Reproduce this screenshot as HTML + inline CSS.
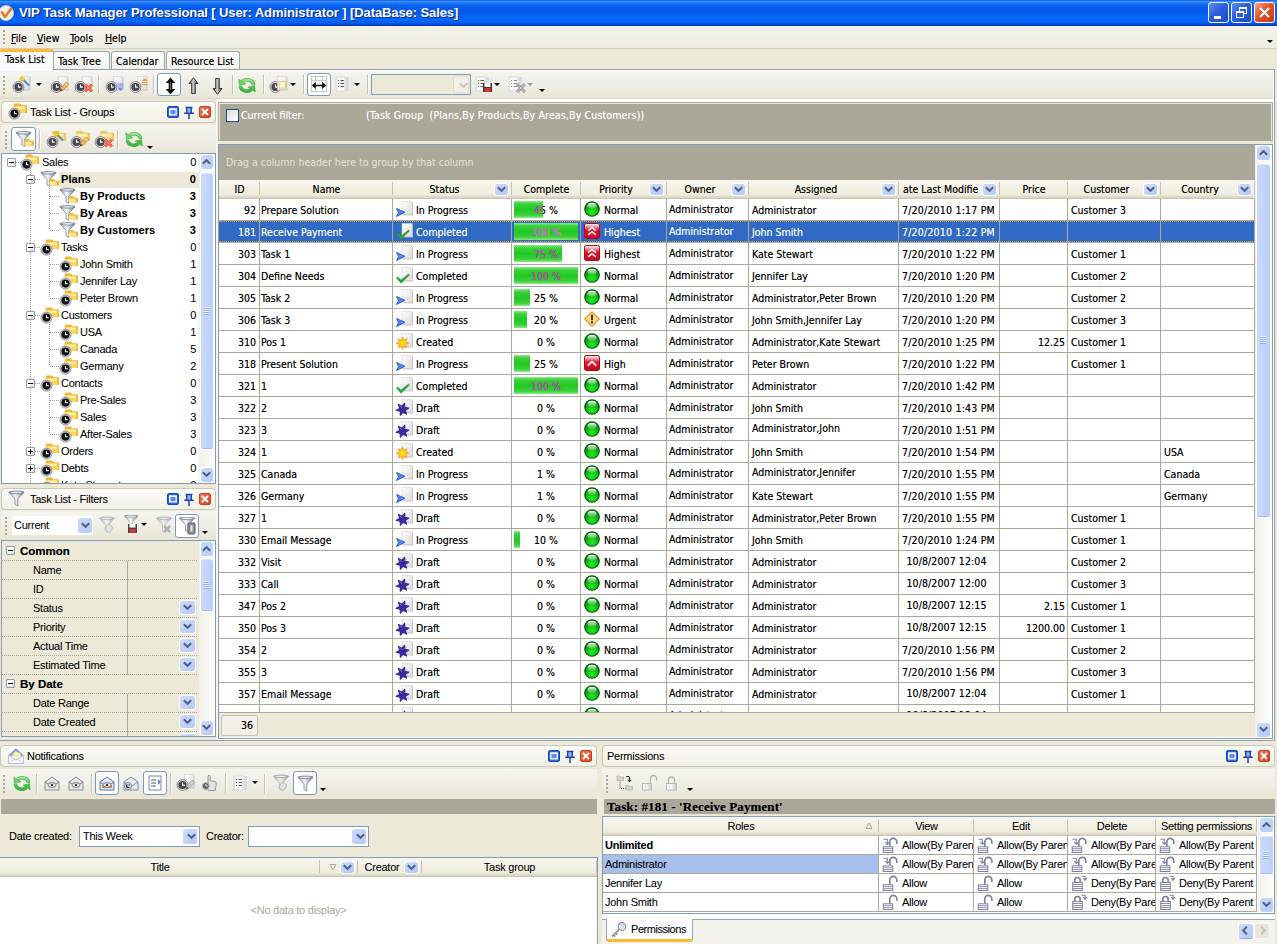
<!DOCTYPE html><html><head><meta charset="utf-8"><title>VIP Task Manager Professional</title><style>
*{box-sizing:border-box;margin:0;padding:0}
html,body{width:1277px;height:944px;overflow:hidden;background:#ECE9D8}
body{position:relative;font:10.5px "DejaVu Sans Condensed","Liberation Sans",sans-serif;color:#000;text-shadow:0 0 0 rgba(0,0,0,.5)}
.a{position:absolute}
.ms{font:11px "Liberation Sans",sans-serif;letter-spacing:-0.25px;text-shadow:0 0 0 rgba(0,0,0,.15)}
.t{position:absolute;white-space:nowrap;line-height:13px}
u{text-decoration:underline}
.title{left:0;top:0;width:1277px;height:26px;background:linear-gradient(to bottom,#0A5CF0 0%,#3C8CFF 6%,#1C72F8 13%,#0860EE 24%,#0459E8 42%,#0560F2 60%,#0668FC 76%,#0660F4 86%,#0348D4 94%,#0236B4 100%)}
.title .tx{left:19px;top:5px;color:#fff;font:bold 13px "Liberation Sans",sans-serif;line-height:16px;text-shadow:1px 1px 0 #0A2C8C;letter-spacing:-0.1px}
.wb{top:2px;width:21px;height:21px;border:1px solid #fff;border-radius:3px;background:linear-gradient(135deg,#5C8CF3 0%,#2B5FE0 45%,#1F4CC8 100%)}
.wb.x{background:linear-gradient(135deg,#F4A890 0%,#E2542E 45%,#C43A18 100%)}
.menubar{left:0;top:26px;width:1277px;height:23px;background:linear-gradient(to bottom,#F3F2EA,#EFEDE1)}
.tabs{left:0;top:48px;width:1277px;height:23px;background:#ECE9D8}
.tab{top:3px;height:18px;border:1px solid #91A7B4;border-bottom:none;border-radius:3px 3px 0 0;background:linear-gradient(to bottom,#FFFFFF,#F3F2EA);text-align:left;padding-left:4px;font-size:10.5px;line-height:19px;white-space:nowrap}
.tab.sel{top:1px;height:22px;background:#FCFCFE;border-top:3px solid #FFB834;border-radius:3px 3px 0 0;line-height:15px;padding-left:5px;z-index:2}
.tbar{background:linear-gradient(to bottom,#F5F4EE 0%,#F0EFE6 50%,#E8E5D6 100%)}
.grip{width:2px;background-image:repeating-linear-gradient(to bottom,#A8A592 0,#A8A592 2px,transparent 2px,transparent 4px)}
.sep{width:1px;background:#C5C2B2;box-shadow:1px 0 0 #fff}
.pressed{border:1px solid #7A98C2;border-radius:3px;background:#FEFEFD}
.arr{width:0;height:0;border-left:3px solid transparent;border-right:3px solid transparent;border-top:3px solid #000}
.phead{border:1px solid #C9C7BA;border-radius:4px;background:linear-gradient(to bottom,#FBFBF7,#F1F0E6)}
.pb{width:12px;height:12px;border-radius:2px}
.pb.sq{background:#2C66DE;border:1px solid #1B49B8}
.pb.sq:after{content:"";position:absolute;left:1px;top:1px;width:8px;height:8px;border:1.500px solid #fff;border-top-width:2px}
.pb.cl{background:linear-gradient(135deg,#F07A5C,#D8401C);border:1px solid #C8401E}
.sb{background:linear-gradient(to right,#F1F0E9,#FEFEFC)}
.sbtn{border:1px solid #fff;border-radius:3px;background:linear-gradient(135deg,#CDDCFD,#B5C8F7);background-clip:padding-box}
.sthumb{border:1px solid #fff;border-radius:3px;background:linear-gradient(to right,#CBDAFD,#BCCDF9);background-clip:padding-box;box-shadow:inset 0 -1px 0 #9EB8F2, inset 0 1px 0 #D8E4FE}
.cb{width:16px;height:16px;border-radius:3px;background:linear-gradient(135deg,#CDDCFD,#B5C8F7);border:1px solid #fff;background-clip:padding-box}
.hdr{background:linear-gradient(to bottom,#F7F6EE 0%,#EFEDDE 80%,#D8D2BD 100%);border-bottom:1px solid #CBC7B8}
.hc{position:absolute;top:0;height:18px;text-align:center;line-height:19px;white-space:nowrap;overflow:hidden}
.hc:after{content:"";position:absolute;right:0;top:2px;height:13px;width:1px;background:#C5C2B2;box-shadow:1px 0 0 #fff}
.fb{position:absolute;width:15px;height:13px;border-radius:3px;background:linear-gradient(135deg,#CDDCFD,#B5C8F7);border:1px solid #fff;background-clip:padding-box}
.row{position:absolute;left:0;height:22px;border-bottom:1px solid #ACA899}
.c{position:absolute;top:0;height:21px;border-right:1px solid #ACA899;white-space:nowrap;overflow:hidden;line-height:22px}
.row.sel .c{background:#316AC5;color:#fff;text-shadow:0 0 0 rgba(255,255,255,.5)}
.bar{position:absolute;left:2px;top:2px;height:17px;background:linear-gradient(to bottom,#8CE98A 0%,#38D038 18%,#22C822 50%,#38D038 82%,#8CE98A 100%)}
</style></head><body><div class="a title"><div class="t tx">VIP Task Manager Professional [ User: Administrator ] [DataBase: Sales]</div><svg width="16" height="16" viewBox="0 0 16 16" style="display:block;position:absolute;left:-2px;top:5px"><circle cx="8" cy="8" r="7.500" fill="#f6f3ec" stroke="#c8c2b0"/><path d="M3.500 6.500l3.500 5.500 6.500-9" stroke="#e8791a" stroke-width="2.600" fill="none" stroke-linejoin="round"/></svg><div class="a wb" style="left:1208px"><div class="a" style="left:5px;top:13px;width:7px;height:3px;background:#fff"></div></div><div class="a wb" style="left:1231px"><div class="a" style="left:7px;top:4px;width:8px;height:7px;border:1px solid #fff;border-top-width:2px"></div><div class="a" style="left:4px;top:8px;width:8px;height:7px;border:1px solid #fff;border-top-width:2px;background:#2B5FE0"></div></div><div class="a wb x" style="left:1254px"><svg width="19" height="19" viewBox="0 0 19 19" style="display:block;"><path d="M5 5l9 9M14 5l-9 9" stroke="#fff" stroke-width="2.200"/></svg></div></div><div class="a menubar"><div class="a grip" style="left:3px;top:4px;height:16px;width:2px"></div><div class="t" style="left:11px;top:6px"><u>F</u>ile</div><div class="t" style="left:37px;top:6px"><u>V</u>iew</div><div class="t" style="left:70px;top:6px"><u>T</u>ools</div><div class="t" style="left:105px;top:6px"><u>H</u>elp</div><div class="a arr" style="left:1267px;top:14px;border-top-color:#000"></div></div><div class="a tabs"><div class="a" style="left:0;top:0;width:1277px;height:1px;background:#D3CFBE"></div><div class="a" style="left:0;top:21px;width:1275px;height:1px;background:#8E9DB0"></div><div class="a" style="left:0;top:22px;width:1274px;height:1px;background:#fff"></div><div class="a" style="left:1274px;top:21px;width:1px;height:32px;background:#8E9DB0"></div><div class="a" style="left:1273px;top:22px;width:1px;height:31px;background:#fff"></div><div class="a tab sel" style="left:-1px;width:55px">Task List</div><div class="a tab" style="left:53px;width:57px">Task Tree</div><div class="a tab" style="left:111px;width:54px">Calendar</div><div class="a tab" style="left:166px;width:74px">Resource List</div></div><div class="a tbar" style="left:0;top:71px;width:1273px;height:28px;border-bottom:1px solid #DAD7C8"><div class="a grip" style="left:3px;top:5px;height:18px"></div><div class="a" style="left:12px;top:4px;"><svg width="22" height="19" viewBox="0 0 22 19" style="display:block;"><defs><linearGradient id="g1" x1="0" y1="0" x2="1" y2="1"><stop offset="0" stop-color="#ffffff"/><stop offset="1" stop-color="#dcdcdc"/></linearGradient></defs><rect x="9.4" y="2.4" width="9" height="13" fill="#bdbdbd"/><rect x="8.5" y="1.5" width="9" height="13" fill="url(#g1)" stroke="#d0d0d0" stroke-width="0.6"/><circle cx="6.5" cy="12" r="5.5" fill="#d4d4e2" stroke="#6a6a78" stroke-width="0.7"/><circle cx="6.5" cy="12" r="4.1" fill="#4a4a4a"/><path d="M6.5 9.6V12.1H8.8" stroke="#fff" stroke-width="1.1" fill="none"/><path d="M11.500 5l5.500 5.500" stroke="#4a86e0" stroke-width="1.900"/><path d="M10.200 1.300l0.900 1.900 2 0.300-1.500 1.400 0.400 2-1.800-1-1.800 1 0.400-2-1.500-1.400 2-0.300z" fill="#f5d020" stroke="#b89a10" stroke-width="0.400"/></svg></div><div class="a arr" style="left:36px;top:12px;border-top-color:#000"></div><div class="a" style="left:50px;top:4px;"><svg width="22" height="19" viewBox="0 0 22 19" style="display:block;"><defs><linearGradient id="g2" x1="0" y1="0" x2="1" y2="1"><stop offset="0" stop-color="#ffffff"/><stop offset="1" stop-color="#dcdcdc"/></linearGradient></defs><rect x="9.4" y="2.4" width="9" height="13" fill="#bdbdbd"/><rect x="8.5" y="1.5" width="9" height="13" fill="url(#g2)" stroke="#d0d0d0" stroke-width="0.6"/><circle cx="6.5" cy="12" r="5.5" fill="#d4d4e2" stroke="#6a6a78" stroke-width="0.7"/><circle cx="6.5" cy="12" r="4.1" fill="#4a4a4a"/><path d="M6.5 9.6V12.1H8.8" stroke="#fff" stroke-width="1.1" fill="none"/><path d="M10 16l0.800-3.200 5.700-5.800 2.400 2.400-5.700 5.800z" fill="#f2b45a" stroke="#a8702a" stroke-width="0.600"/><path d="M15.300 8.200l2.400 2.400" stroke="#d8d8d8" stroke-width="1.200"/><path d="M10 16l0.700-2.600 1.900 1.900z" fill="#333"/></svg></div><div class="a" style="left:74px;top:4px;"><svg width="22" height="19" viewBox="0 0 22 19" style="display:block;"><defs><linearGradient id="g3" x1="0" y1="0" x2="1" y2="1"><stop offset="0" stop-color="#ffffff"/><stop offset="1" stop-color="#dcdcdc"/></linearGradient></defs><rect x="9.4" y="2.4" width="9" height="13" fill="#bdbdbd"/><rect x="8.5" y="1.5" width="9" height="13" fill="url(#g3)" stroke="#d0d0d0" stroke-width="0.6"/><circle cx="6.5" cy="12" r="5.5" fill="#d4d4e2" stroke="#6a6a78" stroke-width="0.7"/><circle cx="6.5" cy="12" r="4.1" fill="#4a4a4a"/><path d="M6.5 9.6V12.1H8.8" stroke="#fff" stroke-width="1.1" fill="none"/><path d="M11 9.500l7 7M18 9.500l-7 7" stroke="#ef4a3c" stroke-width="2.900"/><path d="M11 9.500l7 7M18 9.500l-7 7" stroke="#ffb0a0" stroke-width="0.800"/></svg></div><div class="a sep" style="left:98px;top:4px;height:19px"></div><div class="a" style="left:105px;top:4px;"><svg width="22" height="19" viewBox="0 0 22 19" style="display:block;"><defs><linearGradient id="g4" x1="0" y1="0" x2="1" y2="1"><stop offset="0" stop-color="#ffffff"/><stop offset="1" stop-color="#dcdcdc"/></linearGradient></defs><rect x="9.4" y="2.4" width="9" height="13" fill="#bdbdbd"/><rect x="8.5" y="1.5" width="9" height="13" fill="url(#g4)" stroke="#d0d0d0" stroke-width="0.6"/><circle cx="6.5" cy="12" r="5.5" fill="#d4d4e2" stroke="#6a6a78" stroke-width="0.7"/><circle cx="6.5" cy="12" r="4.1" fill="#4a4a4a"/><path d="M6.5 9.6V12.1H8.8" stroke="#fff" stroke-width="1.1" fill="none"/><path d="M12.500 9h6M12.500 11h6" stroke="#6c8cf0" stroke-width="1.100"/><path d="M12.500 12.500h6l-3 3.500z" fill="#6c8cf0"/></svg></div><div class="a" style="left:129px;top:4px;"><svg width="22" height="19" viewBox="0 0 22 19" style="display:block;"><defs><linearGradient id="g5" x1="0" y1="0" x2="1" y2="1"><stop offset="0" stop-color="#ffffff"/><stop offset="1" stop-color="#dcdcdc"/></linearGradient></defs><rect x="9.4" y="2.4" width="9" height="13" fill="#bdbdbd"/><rect x="8.5" y="1.5" width="9" height="13" fill="url(#g5)" stroke="#d0d0d0" stroke-width="0.6"/><circle cx="6.5" cy="12" r="5.5" fill="#d4d4e2" stroke="#6a6a78" stroke-width="0.7"/><circle cx="6.5" cy="12" r="4.1" fill="#4a4a4a"/><path d="M6.5 9.6V12.1H8.8" stroke="#fff" stroke-width="1.1" fill="none"/><path d="M15.500 3l3 3.300h-6z" fill="#f59a4c"/><path d="M12.500 7.500h6M12.500 9.500h6" stroke="#f59a4c" stroke-width="1.100"/></svg></div><div class="a sep" style="left:153px;top:4px;height:19px"></div><div class="a pressed" style="left:157px;top:2px;width:24px;height:23px"></div><div class="a" style="left:165px;top:6px;"><svg width="11" height="18" viewBox="0 0 11 18" style="display:block;"><defs><linearGradient id="g6" x1="0" y1="0" x2="1" y2="0"><stop offset="0" stop-color="#000"/><stop offset="0.5" stop-color="#666"/><stop offset="1" stop-color="#000"/></linearGradient></defs><path d="M5.500 0.500l4.800 5.500h-3v6h3l-4.800 5.500-4.800-5.500h3v-6h-3z" fill="#0a0a0a"/><rect x="4.300" y="5" width="2.400" height="8" fill="url(#g6)"/></svg></div><div class="a" style="left:188px;top:6px;"><svg width="11" height="18" viewBox="0 0 11 18" style="display:block;"><defs><linearGradient id="g7" x1="0" y1="0" x2="1" y2="0"><stop offset="0" stop-color="#3c3c3c"/><stop offset="0.45" stop-color="#cfcfcf"/><stop offset="1" stop-color="#303030"/></linearGradient></defs><path d="M5.500 0.800l4.500 5.700h-2.700v10h-3.600v-10h-2.700z" fill="url(#g7)" stroke="#2a2a2a" stroke-width="0.900" stroke-linejoin="round"/></svg></div><div class="a" style="left:212px;top:6px;"><svg width="11" height="18" viewBox="0 0 11 18" style="display:block;"><defs><linearGradient id="g8" x1="0" y1="0" x2="1" y2="0"><stop offset="0" stop-color="#3c3c3c"/><stop offset="0.45" stop-color="#cfcfcf"/><stop offset="1" stop-color="#303030"/></linearGradient></defs><path d="M5.500 17.200l4.500-5.700h-2.700v-10h-3.600v10h-2.700z" fill="url(#g8)" stroke="#2a2a2a" stroke-width="0.900" stroke-linejoin="round"/></svg></div><div class="a sep" style="left:232px;top:4px;height:19px"></div><div class="a" style="left:238px;top:6px;"><svg width="18" height="17" viewBox="0 0 18 17" style="display:block;"><defs><linearGradient id="g9" gradientUnits="userSpaceOnUse" x1="0" y1="0" x2="0" y2="17"><stop offset="0" stop-color="#b4f0ac"/><stop offset="0.5" stop-color="#5ccc5c"/><stop offset="1" stop-color="#2ea836"/></linearGradient></defs><path d="M15.600 7.800A6.400 5.400 0 0 0 4.600 4.400" fill="none" stroke="#3aa840" stroke-width="3.400"/><path d="M15.600 7.800A6.400 5.400 0 0 0 4.600 4.400" fill="none" stroke="url(#g9)" stroke-width="2.400"/><path d="M0.800 2l0.600 6.600 6.400-1.800z" fill="#6cd468" stroke="#3aa840" stroke-width="0.600" stroke-linejoin="round"/><path d="M2.400 9.200A6.400 5.400 0 0 0 13.400 12.600" fill="none" stroke="#3aa840" stroke-width="3.400"/><path d="M2.400 9.200A6.400 5.400 0 0 0 13.400 12.600" fill="none" stroke="url(#g9)" stroke-width="2.400"/><path d="M17.200 15l-0.600-6.600-6.400 1.800z" fill="#4cc04c" stroke="#3aa840" stroke-width="0.600" stroke-linejoin="round"/></svg></div><div class="a sep" style="left:263px;top:4px;height:19px"></div><div class="a" style="left:269px;top:4px;"><svg width="22" height="19" viewBox="0 0 22 19" style="display:block;"><circle cx="6.5" cy="12" r="5.5" fill="#d4d4e2" stroke="#6a6a78" stroke-width="0.7"/><circle cx="6.5" cy="12" r="4.1" fill="#4a4a4a"/><path d="M6.5 9.6V12.1H8.8" stroke="#fff" stroke-width="1.1" fill="none"/><defs><linearGradient id="g10" x1="0" y1="0" x2="1" y2="1"><stop offset="0" stop-color="#ffffff"/><stop offset="1" stop-color="#dcdcdc"/></linearGradient></defs><rect x="9.4" y="2.4" width="9" height="13" fill="#bdbdbd"/><rect x="8.5" y="1.5" width="9" height="13" fill="url(#g10)" stroke="#d0d0d0" stroke-width="0.6"/><rect x="10" y="6.500" width="6.500" height="6.500" fill="#fdf6c0" stroke="#d8c878" stroke-width="0.800"/></svg></div><div class="a arr" style="left:290px;top:12px;border-top-color:#000"></div><div class="a sep" style="left:303px;top:4px;height:19px"></div><div class="a pressed" style="left:307px;top:2px;width:24px;height:23px"></div><div class="a" style="left:310px;top:4px;"><svg width="18" height="18" viewBox="0 0 18 18" style="display:block;"><rect x="1.500" y="1.500" width="15" height="15" fill="#fff" stroke="#c4c4c4"/><path d="M1.500 5.500h15M5.500 1.500v15M12.500 1.500v15" stroke="#cdcdcd"/><path d="M3 10.500h12" stroke="#111" stroke-width="1.600"/><path d="M1.800 10.500l4-3.500v7zM16.200 10.500l-4-3.500v7z" fill="#111"/></svg></div><div class="a" style="left:335px;top:4px;"><svg width="18" height="18" viewBox="0 0 18 18" style="display:block;"><rect x="1" y="2" width="9" height="14" fill="#f8f8f8" stroke="#cfcfcf" stroke-width="0.800"/><rect x="11" y="2" width="3" height="14" fill="#dcdcdc"/><rect x="15" y="2" width="2" height="14" fill="#e8e8e8"/><path d="M3 5.500h1M3 8.500h1M3 11.500h1M5.500 5.500h3.500M5.500 8.500h3.500M5.500 11.500h3.500" stroke="#555" stroke-width="1.200"/></svg></div><div class="a arr" style="left:354px;top:12px;border-top-color:#000"></div><div class="a sep" style="left:367px;top:4px;height:19px"></div><div class="a" style="left:371px;top:3px;width:100px;height:21px;border:1px solid #7F9DB9;background:#ECE9D8"><div class="a" style="right:1px;top:1px;width:16px;height:17px;background:#F1EFE6;border:1px solid #DEDBCB;border-radius:2px"></div><svg class="a" style="left:87px;top:7px" width="9" height="9" viewBox="0 0 9 9"><path d="M0.800 1.200l3.700 3.600 3.700-3.600" stroke="#C9C7BA" stroke-width="2" fill="none"/></svg></div><div class="a" style="left:475px;top:4px;"><svg width="18" height="18" viewBox="0 0 18 18" style="display:block;"><rect x="1" y="2" width="9" height="14" fill="#f8f8f8" stroke="#cfcfcf" stroke-width="0.800"/><rect x="11" y="2" width="3" height="14" fill="#dcdcdc"/><rect x="15" y="2" width="2" height="14" fill="#e8e8e8"/><path d="M3 5.500h1M3 8.500h1M3 11.500h1M5.500 5.500h3.500M5.500 8.500h3.500M5.500 11.500h3.500" stroke="#555" stroke-width="1.200"/><rect x="8" y="8" width="9" height="9" fill="#3a3a3a"/><rect x="9.500" y="8" width="6" height="4" fill="#fff"/><rect x="9.500" y="13" width="6" height="4" fill="#e03030"/></svg></div><div class="a arr" style="left:494px;top:12px;border-top-color:#000"></div><div class="a" style="left:508px;top:4px;"><svg width="18" height="18" viewBox="0 0 18 18" style="display:block;"><rect x="1" y="2" width="9" height="14" fill="#f8f8f8" stroke="#cfcfcf" stroke-width="0.800"/><rect x="11" y="2" width="3" height="14" fill="#dcdcdc"/><rect x="15" y="2" width="2" height="14" fill="#e8e8e8"/><path d="M3 5.500h1M3 8.500h1M3 11.500h1M5.500 5.500h3.500M5.500 8.500h3.500M5.500 11.500h3.500" stroke="#8a8a8a" stroke-width="1.200"/><path d="M9 9l8 8M17 9l-8 8" stroke="#9c9c9c" stroke-width="3"/><path d="M9 9l8 8M17 9l-8 8" stroke="#c8c8c8" stroke-width="1"/></svg></div><div class="a arr" style="left:527px;top:12px;border-top-color:#9A9887"></div><div class="a arr" style="left:539px;top:18px;border-top-color:#000"></div></div><div class="a phead" style="left:1px;top:101px;width:215px;height:22px"><div class="a" style="left:6px;top:1px;"><svg width="19" height="17" viewBox="0 0 19 17" style="display:block;"><g opacity="1"><path d="M5.5 2.0q0-1.500 1.500-1.500h4.800000000000001l1.500 1.800h5.04q1.200 0 1.200 1.200v6.5h-12z" fill="#eab83a"/><rect x="5.5" y="3.1" width="12" height="6.9" rx="1.200" fill="#ffd75e"/><rect x="6.3" y="3.7" width="10.4" height="2.200" rx="0.800" fill="#fff3b8" opacity="0.85"/></g><circle cx="6.5" cy="10.6" r="5.5" fill="#d4d4e2" stroke="#6a6a78" stroke-width="0.7"/><circle cx="6.5" cy="10.6" r="4.1" fill="#141414"/><path d="M6.5 8.2V10.7H8.8" stroke="#fff" stroke-width="1.1" fill="none"/></svg></div><div class="t ms" style="left:28px;top:4px">Task List - Groups</div><div class="a" style="left:165px;top:4px;"><svg width="12" height="12" viewBox="0 0 12 12" style="display:block;"><rect x="0.500" y="0.500" width="11" height="11" rx="1.500" fill="#2A64DC" stroke="#1A48B4"/><rect x="2.800" y="3.300" width="6.400" height="5.600" fill="#5C8CF0" stroke="#fff" stroke-width="1.300"/><path d="M2.200 3h7.600" stroke="#fff" stroke-width="1.200"/></svg></div><div class="a" style="left:181px;top:4px;"><svg width="12" height="13" viewBox="0 0 12 13" style="display:block;"><rect x="4.300" y="2" width="3.400" height="4.500" fill="#8CB8F4"/><path d="M2.500 1.600h7M3.800 2v4.800M8.200 2v4.800M1.200 7.300h9.600M6 8v5" stroke="#1E40B0" stroke-width="1.500" fill="none"/></svg></div><div class="a pb cl" style="left:197px;top:4px"><svg width="10" height="10" viewBox="0 0 10 10" style="display:block;"><path d="M2 2l6 6M8 2l-6 6" stroke="#fff" stroke-width="1.800"/></svg></div></div><div class="a tbar" style="left:1px;top:125px;width:215px;height:28px"><div class="a grip" style="left:4px;top:6px;height:18px"></div><div class="a pressed" style="left:10px;top:2px;width:25px;height:24px"></div><div class="a" style="left:14px;top:6px;"><svg width="19" height="17" viewBox="0 0 19 17" style="display:block;"><defs><linearGradient id="g11" x1="0" y1="0" x2="1" y2="0"><stop offset="0" stop-color="#aab2c0"/><stop offset="0.45" stop-color="#f4f6fa"/><stop offset="1" stop-color="#6c7686"/></linearGradient></defs><g transform="translate(0.5 0.5) scale(1.0)"><path d="M0.500 1.200l6 6.800v5.500l2.800 1.500v-7l6.200-6.800z" fill="url(#g11)" stroke="#6c7686" stroke-width="0.700" stroke-linejoin="round"/><ellipse cx="8" cy="1.300" rx="7.600" ry="1.300" fill="#aab2c0" stroke="#6c7686" stroke-width="0.700"/><ellipse cx="8" cy="1.300" rx="5.500" ry="0.600" fill="#f4f6fa"/></g><g opacity="1"><path d="M9.5 9.5q0-1.500 1.500-1.500h3.0l1.500 1.800h3.15q1.200 0 1.200 1.200v3.5h-7.5z" fill="#eab83a"/><rect x="9.5" y="10.6" width="7.5" height="3.9" rx="1.200" fill="#ffd75e"/><rect x="10.3" y="11.2" width="5.9" height="2.200" rx="0.800" fill="#fff3b8" opacity="0.85"/></g></svg></div><div class="a sep" style="left:38px;top:5px;height:19px"></div><div class="a" style="left:45px;top:5px;"><svg width="22" height="19" viewBox="0 0 22 19" style="display:block;"><g opacity="0.75"><path d="M6 2.5q0-1.500 1.500-1.500h4.800000000000001l1.500 1.800h5.04q1.200 0 1.200 1.200v7h-12z" fill="#eab83a"/><rect x="6" y="3.6" width="12" height="7.4" rx="1.200" fill="#ffd75e"/><rect x="6.8" y="4.2" width="10.4" height="2.200" rx="0.800" fill="#fff3b8" opacity="0.85"/></g><circle cx="6.5" cy="12" r="5.5" fill="#d4d4e2" stroke="#6a6a78" stroke-width="0.7"/><circle cx="6.5" cy="12" r="4.1" fill="#4a4a4a"/><path d="M6.5 9.6V12.1H8.8" stroke="#fff" stroke-width="1.1" fill="none"/><path d="M11.500 5l5.500 5.500" stroke="#4a86e0" stroke-width="1.900"/><path d="M10.200 1.300l0.900 1.900 2 0.300-1.500 1.400 0.400 2-1.800-1-1.800 1 0.400-2-1.500-1.400 2-0.300z" fill="#f5d020" stroke="#b89a10" stroke-width="0.400"/></svg></div><div class="a" style="left:69px;top:5px;"><svg width="22" height="19" viewBox="0 0 22 19" style="display:block;"><g opacity="0.75"><path d="M6 2.5q0-1.500 1.500-1.500h4.800000000000001l1.500 1.800h5.04q1.200 0 1.200 1.200v7h-12z" fill="#eab83a"/><rect x="6" y="3.6" width="12" height="7.4" rx="1.200" fill="#ffd75e"/><rect x="6.8" y="4.2" width="10.4" height="2.200" rx="0.800" fill="#fff3b8" opacity="0.85"/></g><circle cx="6.5" cy="12" r="5.5" fill="#d4d4e2" stroke="#6a6a78" stroke-width="0.7"/><circle cx="6.5" cy="12" r="4.1" fill="#4a4a4a"/><path d="M6.5 9.6V12.1H8.8" stroke="#fff" stroke-width="1.1" fill="none"/><path d="M10 16l0.800-3.200 5.700-5.800 2.400 2.400-5.700 5.800z" fill="#f2b45a" stroke="#a8702a" stroke-width="0.600"/><path d="M15.300 8.200l2.400 2.400" stroke="#d8d8d8" stroke-width="1.200"/><path d="M10 16l0.700-2.600 1.900 1.900z" fill="#333"/></svg></div><div class="a" style="left:93px;top:5px;"><svg width="22" height="19" viewBox="0 0 22 19" style="display:block;"><g opacity="0.75"><path d="M6 2.5q0-1.500 1.500-1.500h4.800000000000001l1.500 1.800h5.04q1.200 0 1.200 1.200v7h-12z" fill="#eab83a"/><rect x="6" y="3.6" width="12" height="7.4" rx="1.200" fill="#ffd75e"/><rect x="6.8" y="4.2" width="10.4" height="2.200" rx="0.800" fill="#fff3b8" opacity="0.85"/></g><circle cx="6.5" cy="12" r="5.5" fill="#d4d4e2" stroke="#6a6a78" stroke-width="0.7"/><circle cx="6.5" cy="12" r="4.1" fill="#4a4a4a"/><path d="M6.5 9.6V12.1H8.8" stroke="#fff" stroke-width="1.1" fill="none"/><path d="M11 9.500l7 7M18 9.500l-7 7" stroke="#ef4a3c" stroke-width="2.900"/><path d="M11 9.500l7 7M18 9.500l-7 7" stroke="#ffb0a0" stroke-width="0.800"/></svg></div><div class="a sep" style="left:116px;top:5px;height:19px"></div><div class="a" style="left:124px;top:6px;"><svg width="18" height="17" viewBox="0 0 18 17" style="display:block;"><defs><linearGradient id="g12" gradientUnits="userSpaceOnUse" x1="0" y1="0" x2="0" y2="17"><stop offset="0" stop-color="#b4f0ac"/><stop offset="0.5" stop-color="#5ccc5c"/><stop offset="1" stop-color="#2ea836"/></linearGradient></defs><path d="M15.600 7.800A6.400 5.400 0 0 0 4.600 4.400" fill="none" stroke="#3aa840" stroke-width="3.400"/><path d="M15.600 7.800A6.400 5.400 0 0 0 4.600 4.400" fill="none" stroke="url(#g12)" stroke-width="2.400"/><path d="M0.800 2l0.600 6.600 6.400-1.800z" fill="#6cd468" stroke="#3aa840" stroke-width="0.600" stroke-linejoin="round"/><path d="M2.400 9.200A6.400 5.400 0 0 0 13.400 12.600" fill="none" stroke="#3aa840" stroke-width="3.400"/><path d="M2.400 9.200A6.400 5.400 0 0 0 13.400 12.600" fill="none" stroke="url(#g12)" stroke-width="2.400"/><path d="M17.200 15l-0.600-6.600-6.400 1.800z" fill="#4cc04c" stroke="#3aa840" stroke-width="0.600" stroke-linejoin="round"/></svg></div><div class="a arr" style="left:146px;top:21px;border-top-color:#000"></div></div><div class="a" style="left:1px;top:153px;width:215px;height:331px;border:1px solid #7F9DB9;background:#fff;overflow:hidden"><div class="a" style="left:28px;top:14px;width:1px;height:316px;background:repeating-linear-gradient(to bottom,#A0A0A0 0,#A0A0A0 1px,transparent 1px,transparent 2px)"></div><div class="a" style="left:47px;top:30px;width:1px;height:46px;background:repeating-linear-gradient(to bottom,#A0A0A0 0,#A0A0A0 1px,transparent 1px,transparent 2px)"></div><div class="a" style="left:47px;top:98px;width:1px;height:46px;background:repeating-linear-gradient(to bottom,#A0A0A0 0,#A0A0A0 1px,transparent 1px,transparent 2px)"></div><div class="a" style="left:47px;top:166px;width:1px;height:46px;background:repeating-linear-gradient(to bottom,#A0A0A0 0,#A0A0A0 1px,transparent 1px,transparent 2px)"></div><div class="a" style="left:47px;top:234px;width:1px;height:46px;background:repeating-linear-gradient(to bottom,#A0A0A0 0,#A0A0A0 1px,transparent 1px,transparent 2px)"></div><div class="a" style="left:10px;top:8px;height:1px;width:9px;background:repeating-linear-gradient(to right,#A0A0A0 0,#A0A0A0 1px,transparent 1px,transparent 2px)"></div><div class="a" style="left:5px;top:4px;width:9px;height:9px;border:1px solid #8C9CB4;border-radius:1px;background:linear-gradient(135deg,#fff 45%,#D8D4C4)"><div class="a" style="left:1px;top:3px;width:5px;height:1px;background:#000"></div></div><div class="a" style="left:18px;top:0px;"><svg width="19" height="17" viewBox="0 0 19 17" style="display:block;"><g opacity="1"><path d="M5.5 2.0q0-1.500 1.500-1.500h4.800000000000001l1.500 1.800h5.04q1.200 0 1.200 1.200v6.5h-12z" fill="#eab83a"/><rect x="5.5" y="3.1" width="12" height="6.9" rx="1.200" fill="#ffd75e"/><rect x="6.3" y="3.7" width="10.4" height="2.200" rx="0.800" fill="#fff3b8" opacity="0.85"/></g><circle cx="6.5" cy="10.6" r="5.5" fill="#d4d4e2" stroke="#6a6a78" stroke-width="0.7"/><circle cx="6.5" cy="10.6" r="4.1" fill="#141414"/><path d="M6.5 8.2V10.7H8.8" stroke="#fff" stroke-width="1.1" fill="none"/></svg></div><div class="t ms" style="left:40px;top:2px;">Sales</div><div class="t ms" style="right:19px;top:2px;">0</div><div class="a" style="left:29px;top:25px;height:1px;width:9px;background:repeating-linear-gradient(to right,#A0A0A0 0,#A0A0A0 1px,transparent 1px,transparent 2px)"></div><div class="a" style="left:57px;top:18px;width:140px;height:16px;background:#ECE9D8"></div><div class="a" style="left:24px;top:21px;width:9px;height:9px;border:1px solid #8C9CB4;border-radius:1px;background:linear-gradient(135deg,#fff 45%,#D8D4C4)"><div class="a" style="left:1px;top:3px;width:5px;height:1px;background:#000"></div></div><div class="a" style="left:38px;top:17px;"><svg width="19" height="17" viewBox="0 0 19 17" style="display:block;"><defs><linearGradient id="g13" x1="0" y1="0" x2="1" y2="0"><stop offset="0" stop-color="#aab2c0"/><stop offset="0.45" stop-color="#f4f6fa"/><stop offset="1" stop-color="#6c7686"/></linearGradient></defs><g transform="translate(0.5 0.5) scale(1.0)"><path d="M0.500 1.200l6 6.800v5.500l2.800 1.500v-7l6.200-6.800z" fill="url(#g13)" stroke="#6c7686" stroke-width="0.700" stroke-linejoin="round"/><ellipse cx="8" cy="1.300" rx="7.600" ry="1.300" fill="#aab2c0" stroke="#6c7686" stroke-width="0.700"/><ellipse cx="8" cy="1.300" rx="5.500" ry="0.600" fill="#f4f6fa"/></g><g opacity="1"><path d="M9.5 9.5q0-1.500 1.500-1.500h3.0l1.500 1.800h3.15q1.200 0 1.200 1.200v3.5h-7.5z" fill="#eab83a"/><rect x="9.5" y="10.6" width="7.5" height="3.9" rx="1.200" fill="#ffd75e"/><rect x="10.3" y="11.2" width="5.9" height="2.200" rx="0.800" fill="#fff3b8" opacity="0.85"/></g></svg></div><div class="t ms" style="left:59px;top:19px;font-weight:bold;letter-spacing:0.05px;">Plans</div><div class="t ms" style="right:19px;top:19px;font-weight:bold;letter-spacing:0.05px;">0</div><div class="a" style="left:48px;top:42px;height:1px;width:9px;background:repeating-linear-gradient(to right,#A0A0A0 0,#A0A0A0 1px,transparent 1px,transparent 2px)"></div><div class="a" style="left:57px;top:34px;"><svg width="19" height="17" viewBox="0 0 19 17" style="display:block;"><defs><linearGradient id="g14" x1="0" y1="0" x2="1" y2="0"><stop offset="0" stop-color="#aab2c0"/><stop offset="0.45" stop-color="#f4f6fa"/><stop offset="1" stop-color="#6c7686"/></linearGradient></defs><g transform="translate(0.5 0.5) scale(1.0)"><path d="M0.500 1.200l6 6.800v5.500l2.800 1.500v-7l6.200-6.800z" fill="url(#g14)" stroke="#6c7686" stroke-width="0.700" stroke-linejoin="round"/><ellipse cx="8" cy="1.300" rx="7.600" ry="1.300" fill="#aab2c0" stroke="#6c7686" stroke-width="0.700"/><ellipse cx="8" cy="1.300" rx="5.500" ry="0.600" fill="#f4f6fa"/></g><g opacity="1"><path d="M9.5 9.5q0-1.500 1.500-1.500h3.0l1.500 1.800h3.15q1.200 0 1.200 1.200v3.5h-7.5z" fill="#eab83a"/><rect x="9.5" y="10.6" width="7.5" height="3.9" rx="1.200" fill="#ffd75e"/><rect x="10.3" y="11.2" width="5.9" height="2.200" rx="0.800" fill="#fff3b8" opacity="0.85"/></g></svg></div><div class="t ms" style="left:78px;top:36px;font-weight:bold;letter-spacing:0.05px;">By Products</div><div class="t ms" style="right:19px;top:36px;font-weight:bold;letter-spacing:0.05px;">3</div><div class="a" style="left:48px;top:59px;height:1px;width:9px;background:repeating-linear-gradient(to right,#A0A0A0 0,#A0A0A0 1px,transparent 1px,transparent 2px)"></div><div class="a" style="left:57px;top:51px;"><svg width="19" height="17" viewBox="0 0 19 17" style="display:block;"><defs><linearGradient id="g15" x1="0" y1="0" x2="1" y2="0"><stop offset="0" stop-color="#aab2c0"/><stop offset="0.45" stop-color="#f4f6fa"/><stop offset="1" stop-color="#6c7686"/></linearGradient></defs><g transform="translate(0.5 0.5) scale(1.0)"><path d="M0.500 1.200l6 6.800v5.500l2.800 1.500v-7l6.200-6.800z" fill="url(#g15)" stroke="#6c7686" stroke-width="0.700" stroke-linejoin="round"/><ellipse cx="8" cy="1.300" rx="7.600" ry="1.300" fill="#aab2c0" stroke="#6c7686" stroke-width="0.700"/><ellipse cx="8" cy="1.300" rx="5.500" ry="0.600" fill="#f4f6fa"/></g><g opacity="1"><path d="M9.5 9.5q0-1.500 1.500-1.500h3.0l1.500 1.800h3.15q1.200 0 1.200 1.200v3.5h-7.5z" fill="#eab83a"/><rect x="9.5" y="10.6" width="7.5" height="3.9" rx="1.200" fill="#ffd75e"/><rect x="10.3" y="11.2" width="5.9" height="2.200" rx="0.800" fill="#fff3b8" opacity="0.85"/></g></svg></div><div class="t ms" style="left:78px;top:53px;font-weight:bold;letter-spacing:0.05px;">By Areas</div><div class="t ms" style="right:19px;top:53px;font-weight:bold;letter-spacing:0.05px;">3</div><div class="a" style="left:48px;top:76px;height:1px;width:9px;background:repeating-linear-gradient(to right,#A0A0A0 0,#A0A0A0 1px,transparent 1px,transparent 2px)"></div><div class="a" style="left:57px;top:68px;"><svg width="19" height="17" viewBox="0 0 19 17" style="display:block;"><defs><linearGradient id="g16" x1="0" y1="0" x2="1" y2="0"><stop offset="0" stop-color="#aab2c0"/><stop offset="0.45" stop-color="#f4f6fa"/><stop offset="1" stop-color="#6c7686"/></linearGradient></defs><g transform="translate(0.5 0.5) scale(1.0)"><path d="M0.500 1.200l6 6.800v5.500l2.800 1.500v-7l6.200-6.800z" fill="url(#g16)" stroke="#6c7686" stroke-width="0.700" stroke-linejoin="round"/><ellipse cx="8" cy="1.300" rx="7.600" ry="1.300" fill="#aab2c0" stroke="#6c7686" stroke-width="0.700"/><ellipse cx="8" cy="1.300" rx="5.500" ry="0.600" fill="#f4f6fa"/></g><g opacity="1"><path d="M9.5 9.5q0-1.500 1.500-1.500h3.0l1.500 1.800h3.15q1.200 0 1.200 1.200v3.5h-7.5z" fill="#eab83a"/><rect x="9.5" y="10.6" width="7.5" height="3.9" rx="1.200" fill="#ffd75e"/><rect x="10.3" y="11.2" width="5.9" height="2.200" rx="0.800" fill="#fff3b8" opacity="0.85"/></g></svg></div><div class="t ms" style="left:78px;top:70px;font-weight:bold;letter-spacing:0.05px;">By Customers</div><div class="t ms" style="right:19px;top:70px;font-weight:bold;letter-spacing:0.05px;">3</div><div class="a" style="left:29px;top:93px;height:1px;width:9px;background:repeating-linear-gradient(to right,#A0A0A0 0,#A0A0A0 1px,transparent 1px,transparent 2px)"></div><div class="a" style="left:24px;top:89px;width:9px;height:9px;border:1px solid #8C9CB4;border-radius:1px;background:linear-gradient(135deg,#fff 45%,#D8D4C4)"><div class="a" style="left:1px;top:3px;width:5px;height:1px;background:#000"></div></div><div class="a" style="left:38px;top:85px;"><svg width="19" height="17" viewBox="0 0 19 17" style="display:block;"><g opacity="1"><path d="M5.5 2.0q0-1.500 1.500-1.500h4.800000000000001l1.500 1.800h5.04q1.200 0 1.200 1.200v6.5h-12z" fill="#eab83a"/><rect x="5.5" y="3.1" width="12" height="6.9" rx="1.200" fill="#ffd75e"/><rect x="6.3" y="3.7" width="10.4" height="2.200" rx="0.800" fill="#fff3b8" opacity="0.85"/></g><circle cx="6.5" cy="10.6" r="5.5" fill="#d4d4e2" stroke="#6a6a78" stroke-width="0.7"/><circle cx="6.5" cy="10.6" r="4.1" fill="#141414"/><path d="M6.5 8.2V10.7H8.8" stroke="#fff" stroke-width="1.1" fill="none"/></svg></div><div class="t ms" style="left:59px;top:87px;">Tasks</div><div class="t ms" style="right:19px;top:87px;">0</div><div class="a" style="left:48px;top:110px;height:1px;width:9px;background:repeating-linear-gradient(to right,#A0A0A0 0,#A0A0A0 1px,transparent 1px,transparent 2px)"></div><div class="a" style="left:57px;top:102px;"><svg width="19" height="17" viewBox="0 0 19 17" style="display:block;"><g opacity="1"><path d="M5.5 2.0q0-1.500 1.500-1.500h4.800000000000001l1.500 1.800h5.04q1.200 0 1.200 1.200v6.5h-12z" fill="#eab83a"/><rect x="5.5" y="3.1" width="12" height="6.9" rx="1.200" fill="#ffd75e"/><rect x="6.3" y="3.7" width="10.4" height="2.200" rx="0.800" fill="#fff3b8" opacity="0.85"/></g><circle cx="6.5" cy="10.6" r="5.5" fill="#d4d4e2" stroke="#6a6a78" stroke-width="0.7"/><circle cx="6.5" cy="10.6" r="4.1" fill="#141414"/><path d="M6.5 8.2V10.7H8.8" stroke="#fff" stroke-width="1.1" fill="none"/></svg></div><div class="t ms" style="left:78px;top:104px;">John Smith</div><div class="t ms" style="right:19px;top:104px;">1</div><div class="a" style="left:48px;top:127px;height:1px;width:9px;background:repeating-linear-gradient(to right,#A0A0A0 0,#A0A0A0 1px,transparent 1px,transparent 2px)"></div><div class="a" style="left:57px;top:119px;"><svg width="19" height="17" viewBox="0 0 19 17" style="display:block;"><g opacity="1"><path d="M5.5 2.0q0-1.500 1.500-1.500h4.800000000000001l1.500 1.800h5.04q1.200 0 1.200 1.200v6.5h-12z" fill="#eab83a"/><rect x="5.5" y="3.1" width="12" height="6.9" rx="1.200" fill="#ffd75e"/><rect x="6.3" y="3.7" width="10.4" height="2.200" rx="0.800" fill="#fff3b8" opacity="0.85"/></g><circle cx="6.5" cy="10.6" r="5.5" fill="#d4d4e2" stroke="#6a6a78" stroke-width="0.7"/><circle cx="6.5" cy="10.6" r="4.1" fill="#141414"/><path d="M6.5 8.2V10.7H8.8" stroke="#fff" stroke-width="1.1" fill="none"/></svg></div><div class="t ms" style="left:78px;top:121px;">Jennifer Lay</div><div class="t ms" style="right:19px;top:121px;">1</div><div class="a" style="left:48px;top:144px;height:1px;width:9px;background:repeating-linear-gradient(to right,#A0A0A0 0,#A0A0A0 1px,transparent 1px,transparent 2px)"></div><div class="a" style="left:57px;top:136px;"><svg width="19" height="17" viewBox="0 0 19 17" style="display:block;"><g opacity="1"><path d="M5.5 2.0q0-1.500 1.500-1.500h4.800000000000001l1.500 1.800h5.04q1.200 0 1.200 1.200v6.5h-12z" fill="#eab83a"/><rect x="5.5" y="3.1" width="12" height="6.9" rx="1.200" fill="#ffd75e"/><rect x="6.3" y="3.7" width="10.4" height="2.200" rx="0.800" fill="#fff3b8" opacity="0.85"/></g><circle cx="6.5" cy="10.6" r="5.5" fill="#d4d4e2" stroke="#6a6a78" stroke-width="0.7"/><circle cx="6.5" cy="10.6" r="4.1" fill="#141414"/><path d="M6.5 8.2V10.7H8.8" stroke="#fff" stroke-width="1.1" fill="none"/></svg></div><div class="t ms" style="left:78px;top:138px;">Peter Brown</div><div class="t ms" style="right:19px;top:138px;">1</div><div class="a" style="left:29px;top:161px;height:1px;width:9px;background:repeating-linear-gradient(to right,#A0A0A0 0,#A0A0A0 1px,transparent 1px,transparent 2px)"></div><div class="a" style="left:24px;top:157px;width:9px;height:9px;border:1px solid #8C9CB4;border-radius:1px;background:linear-gradient(135deg,#fff 45%,#D8D4C4)"><div class="a" style="left:1px;top:3px;width:5px;height:1px;background:#000"></div></div><div class="a" style="left:38px;top:153px;"><svg width="19" height="17" viewBox="0 0 19 17" style="display:block;"><g opacity="1"><path d="M5.5 2.0q0-1.500 1.500-1.500h4.800000000000001l1.500 1.800h5.04q1.200 0 1.200 1.200v6.5h-12z" fill="#eab83a"/><rect x="5.5" y="3.1" width="12" height="6.9" rx="1.200" fill="#ffd75e"/><rect x="6.3" y="3.7" width="10.4" height="2.200" rx="0.800" fill="#fff3b8" opacity="0.85"/></g><circle cx="6.5" cy="10.6" r="5.5" fill="#d4d4e2" stroke="#6a6a78" stroke-width="0.7"/><circle cx="6.5" cy="10.6" r="4.1" fill="#141414"/><path d="M6.5 8.2V10.7H8.8" stroke="#fff" stroke-width="1.1" fill="none"/></svg></div><div class="t ms" style="left:59px;top:155px;">Customers</div><div class="t ms" style="right:19px;top:155px;">0</div><div class="a" style="left:48px;top:178px;height:1px;width:9px;background:repeating-linear-gradient(to right,#A0A0A0 0,#A0A0A0 1px,transparent 1px,transparent 2px)"></div><div class="a" style="left:57px;top:170px;"><svg width="19" height="17" viewBox="0 0 19 17" style="display:block;"><g opacity="1"><path d="M5.5 2.0q0-1.500 1.500-1.500h4.800000000000001l1.500 1.800h5.04q1.200 0 1.200 1.200v6.5h-12z" fill="#eab83a"/><rect x="5.5" y="3.1" width="12" height="6.9" rx="1.200" fill="#ffd75e"/><rect x="6.3" y="3.7" width="10.4" height="2.200" rx="0.800" fill="#fff3b8" opacity="0.85"/></g><circle cx="6.5" cy="10.6" r="5.5" fill="#d4d4e2" stroke="#6a6a78" stroke-width="0.7"/><circle cx="6.5" cy="10.6" r="4.1" fill="#141414"/><path d="M6.5 8.2V10.7H8.8" stroke="#fff" stroke-width="1.1" fill="none"/></svg></div><div class="t ms" style="left:78px;top:172px;">USA</div><div class="t ms" style="right:19px;top:172px;">1</div><div class="a" style="left:48px;top:195px;height:1px;width:9px;background:repeating-linear-gradient(to right,#A0A0A0 0,#A0A0A0 1px,transparent 1px,transparent 2px)"></div><div class="a" style="left:57px;top:187px;"><svg width="19" height="17" viewBox="0 0 19 17" style="display:block;"><g opacity="1"><path d="M5.5 2.0q0-1.500 1.500-1.500h4.800000000000001l1.500 1.800h5.04q1.200 0 1.200 1.200v6.5h-12z" fill="#eab83a"/><rect x="5.5" y="3.1" width="12" height="6.9" rx="1.200" fill="#ffd75e"/><rect x="6.3" y="3.7" width="10.4" height="2.200" rx="0.800" fill="#fff3b8" opacity="0.85"/></g><circle cx="6.5" cy="10.6" r="5.5" fill="#d4d4e2" stroke="#6a6a78" stroke-width="0.7"/><circle cx="6.5" cy="10.6" r="4.1" fill="#141414"/><path d="M6.5 8.2V10.7H8.8" stroke="#fff" stroke-width="1.1" fill="none"/></svg></div><div class="t ms" style="left:78px;top:189px;">Canada</div><div class="t ms" style="right:19px;top:189px;">5</div><div class="a" style="left:48px;top:212px;height:1px;width:9px;background:repeating-linear-gradient(to right,#A0A0A0 0,#A0A0A0 1px,transparent 1px,transparent 2px)"></div><div class="a" style="left:57px;top:204px;"><svg width="19" height="17" viewBox="0 0 19 17" style="display:block;"><g opacity="1"><path d="M5.5 2.0q0-1.500 1.500-1.500h4.800000000000001l1.500 1.800h5.04q1.200 0 1.200 1.200v6.5h-12z" fill="#eab83a"/><rect x="5.5" y="3.1" width="12" height="6.9" rx="1.200" fill="#ffd75e"/><rect x="6.3" y="3.7" width="10.4" height="2.200" rx="0.800" fill="#fff3b8" opacity="0.85"/></g><circle cx="6.5" cy="10.6" r="5.5" fill="#d4d4e2" stroke="#6a6a78" stroke-width="0.7"/><circle cx="6.5" cy="10.6" r="4.1" fill="#141414"/><path d="M6.5 8.2V10.7H8.8" stroke="#fff" stroke-width="1.1" fill="none"/></svg></div><div class="t ms" style="left:78px;top:206px;">Germany</div><div class="t ms" style="right:19px;top:206px;">2</div><div class="a" style="left:29px;top:229px;height:1px;width:9px;background:repeating-linear-gradient(to right,#A0A0A0 0,#A0A0A0 1px,transparent 1px,transparent 2px)"></div><div class="a" style="left:24px;top:225px;width:9px;height:9px;border:1px solid #8C9CB4;border-radius:1px;background:linear-gradient(135deg,#fff 45%,#D8D4C4)"><div class="a" style="left:1px;top:3px;width:5px;height:1px;background:#000"></div></div><div class="a" style="left:38px;top:221px;"><svg width="19" height="17" viewBox="0 0 19 17" style="display:block;"><g opacity="1"><path d="M5.5 2.0q0-1.500 1.500-1.500h4.800000000000001l1.500 1.800h5.04q1.200 0 1.200 1.200v6.5h-12z" fill="#eab83a"/><rect x="5.5" y="3.1" width="12" height="6.9" rx="1.200" fill="#ffd75e"/><rect x="6.3" y="3.7" width="10.4" height="2.200" rx="0.800" fill="#fff3b8" opacity="0.85"/></g><circle cx="6.5" cy="10.6" r="5.5" fill="#d4d4e2" stroke="#6a6a78" stroke-width="0.7"/><circle cx="6.5" cy="10.6" r="4.1" fill="#141414"/><path d="M6.5 8.2V10.7H8.8" stroke="#fff" stroke-width="1.1" fill="none"/></svg></div><div class="t ms" style="left:59px;top:223px;">Contacts</div><div class="t ms" style="right:19px;top:223px;">0</div><div class="a" style="left:48px;top:246px;height:1px;width:9px;background:repeating-linear-gradient(to right,#A0A0A0 0,#A0A0A0 1px,transparent 1px,transparent 2px)"></div><div class="a" style="left:57px;top:238px;"><svg width="19" height="17" viewBox="0 0 19 17" style="display:block;"><g opacity="1"><path d="M5.5 2.0q0-1.500 1.500-1.500h4.800000000000001l1.500 1.800h5.04q1.200 0 1.200 1.200v6.5h-12z" fill="#eab83a"/><rect x="5.5" y="3.1" width="12" height="6.9" rx="1.200" fill="#ffd75e"/><rect x="6.3" y="3.7" width="10.4" height="2.200" rx="0.800" fill="#fff3b8" opacity="0.85"/></g><circle cx="6.5" cy="10.6" r="5.5" fill="#d4d4e2" stroke="#6a6a78" stroke-width="0.7"/><circle cx="6.5" cy="10.6" r="4.1" fill="#141414"/><path d="M6.5 8.2V10.7H8.8" stroke="#fff" stroke-width="1.1" fill="none"/></svg></div><div class="t ms" style="left:78px;top:240px;">Pre-Sales</div><div class="t ms" style="right:19px;top:240px;">3</div><div class="a" style="left:48px;top:263px;height:1px;width:9px;background:repeating-linear-gradient(to right,#A0A0A0 0,#A0A0A0 1px,transparent 1px,transparent 2px)"></div><div class="a" style="left:57px;top:255px;"><svg width="19" height="17" viewBox="0 0 19 17" style="display:block;"><g opacity="1"><path d="M5.5 2.0q0-1.500 1.500-1.500h4.800000000000001l1.500 1.800h5.04q1.200 0 1.200 1.200v6.5h-12z" fill="#eab83a"/><rect x="5.5" y="3.1" width="12" height="6.9" rx="1.200" fill="#ffd75e"/><rect x="6.3" y="3.7" width="10.4" height="2.200" rx="0.800" fill="#fff3b8" opacity="0.85"/></g><circle cx="6.5" cy="10.6" r="5.5" fill="#d4d4e2" stroke="#6a6a78" stroke-width="0.7"/><circle cx="6.5" cy="10.6" r="4.1" fill="#141414"/><path d="M6.5 8.2V10.7H8.8" stroke="#fff" stroke-width="1.1" fill="none"/></svg></div><div class="t ms" style="left:78px;top:257px;">Sales</div><div class="t ms" style="right:19px;top:257px;">3</div><div class="a" style="left:48px;top:280px;height:1px;width:9px;background:repeating-linear-gradient(to right,#A0A0A0 0,#A0A0A0 1px,transparent 1px,transparent 2px)"></div><div class="a" style="left:57px;top:272px;"><svg width="19" height="17" viewBox="0 0 19 17" style="display:block;"><g opacity="1"><path d="M5.5 2.0q0-1.500 1.500-1.500h4.800000000000001l1.500 1.800h5.04q1.200 0 1.200 1.200v6.5h-12z" fill="#eab83a"/><rect x="5.5" y="3.1" width="12" height="6.9" rx="1.200" fill="#ffd75e"/><rect x="6.3" y="3.7" width="10.4" height="2.200" rx="0.800" fill="#fff3b8" opacity="0.85"/></g><circle cx="6.5" cy="10.6" r="5.5" fill="#d4d4e2" stroke="#6a6a78" stroke-width="0.7"/><circle cx="6.5" cy="10.6" r="4.1" fill="#141414"/><path d="M6.5 8.2V10.7H8.8" stroke="#fff" stroke-width="1.1" fill="none"/></svg></div><div class="t ms" style="left:78px;top:274px;">After-Sales</div><div class="t ms" style="right:19px;top:274px;">3</div><div class="a" style="left:29px;top:297px;height:1px;width:9px;background:repeating-linear-gradient(to right,#A0A0A0 0,#A0A0A0 1px,transparent 1px,transparent 2px)"></div><div class="a" style="left:24px;top:293px;width:9px;height:9px;border:1px solid #8C9CB4;border-radius:1px;background:linear-gradient(135deg,#fff 45%,#D8D4C4)"><div class="a" style="left:1px;top:3px;width:5px;height:1px;background:#000"></div><div class="a" style="left:3px;top:1px;width:1px;height:5px;background:#000"></div></div><div class="a" style="left:38px;top:289px;"><svg width="19" height="17" viewBox="0 0 19 17" style="display:block;"><g opacity="1"><path d="M5.5 2.0q0-1.500 1.500-1.500h4.800000000000001l1.500 1.800h5.04q1.200 0 1.200 1.200v6.5h-12z" fill="#eab83a"/><rect x="5.5" y="3.1" width="12" height="6.9" rx="1.200" fill="#ffd75e"/><rect x="6.3" y="3.7" width="10.4" height="2.200" rx="0.800" fill="#fff3b8" opacity="0.85"/></g><circle cx="6.5" cy="10.6" r="5.5" fill="#d4d4e2" stroke="#6a6a78" stroke-width="0.7"/><circle cx="6.5" cy="10.6" r="4.1" fill="#141414"/><path d="M6.5 8.2V10.7H8.8" stroke="#fff" stroke-width="1.1" fill="none"/></svg></div><div class="t ms" style="left:59px;top:291px;">Orders</div><div class="t ms" style="right:19px;top:291px;">0</div><div class="a" style="left:29px;top:314px;height:1px;width:9px;background:repeating-linear-gradient(to right,#A0A0A0 0,#A0A0A0 1px,transparent 1px,transparent 2px)"></div><div class="a" style="left:24px;top:310px;width:9px;height:9px;border:1px solid #8C9CB4;border-radius:1px;background:linear-gradient(135deg,#fff 45%,#D8D4C4)"><div class="a" style="left:1px;top:3px;width:5px;height:1px;background:#000"></div><div class="a" style="left:3px;top:1px;width:1px;height:5px;background:#000"></div></div><div class="a" style="left:38px;top:306px;"><svg width="19" height="17" viewBox="0 0 19 17" style="display:block;"><g opacity="1"><path d="M5.5 2.0q0-1.500 1.500-1.500h4.800000000000001l1.500 1.800h5.04q1.200 0 1.200 1.200v6.5h-12z" fill="#eab83a"/><rect x="5.5" y="3.1" width="12" height="6.9" rx="1.200" fill="#ffd75e"/><rect x="6.3" y="3.7" width="10.4" height="2.200" rx="0.800" fill="#fff3b8" opacity="0.85"/></g><circle cx="6.5" cy="10.6" r="5.5" fill="#d4d4e2" stroke="#6a6a78" stroke-width="0.7"/><circle cx="6.5" cy="10.6" r="4.1" fill="#141414"/><path d="M6.5 8.2V10.7H8.8" stroke="#fff" stroke-width="1.1" fill="none"/></svg></div><div class="t ms" style="left:59px;top:308px;">Debts</div><div class="t ms" style="right:19px;top:308px;">0</div><div class="a" style="left:29px;top:331px;height:1px;width:9px;background:repeating-linear-gradient(to right,#A0A0A0 0,#A0A0A0 1px,transparent 1px,transparent 2px)"></div><div class="a" style="left:38px;top:323px;"><svg width="19" height="17" viewBox="0 0 19 17" style="display:block;"><g opacity="1"><path d="M5.5 2.0q0-1.500 1.500-1.500h4.800000000000001l1.500 1.800h5.04q1.200 0 1.200 1.200v6.5h-12z" fill="#eab83a"/><rect x="5.5" y="3.1" width="12" height="6.9" rx="1.200" fill="#ffd75e"/><rect x="6.3" y="3.7" width="10.4" height="2.200" rx="0.800" fill="#fff3b8" opacity="0.85"/></g><circle cx="6.5" cy="10.6" r="5.5" fill="#d4d4e2" stroke="#6a6a78" stroke-width="0.7"/><circle cx="6.5" cy="10.6" r="4.1" fill="#141414"/><path d="M6.5 8.2V10.7H8.8" stroke="#fff" stroke-width="1.1" fill="none"/></svg></div><div class="t ms" style="left:59px;top:325px;">Kate Stewart</div><div class="t ms" style="right:19px;top:325px;">0</div><div class="a sb" style="left:197px;top:0px;width:16px;height:329px"><div class="a sbtn" style="left:1px;top:0;width:14px;height:16px"></div><svg class="a" style="left:3px;top:4px" width="9" height="9" viewBox="0 0 9 9"><path d="M0.800 5.800l3.700-3.600 3.700 3.600" stroke="#4D6185" stroke-width="2" fill="none"/></svg><div class="a sbtn" style="left:1px;top:313px;width:14px;height:16px"></div><svg class="a" style="left:3px;top:317px" width="9" height="9" viewBox="0 0 9 9"><path d="M0.800 1.200l3.700 3.600 3.700-3.600" stroke="#4D6185" stroke-width="2" fill="none"/></svg><div class="a sthumb" style="left:1px;top:18px;width:14px;height:278px"></div><div class="a" style="left:4px;top:153px;width:6px;height:8px;background:repeating-linear-gradient(to bottom,#EEF4FE 0,#EEF4FE 1px,#8CB0F8 1px,#8CB0F8 2px)"></div></div></div><div class="a phead" style="left:1px;top:488px;width:215px;height:22px"><div class="a" style="left:6px;top:1px;"><svg width="17" height="17" viewBox="0 0 17 17" style="display:block;"><defs><linearGradient id="g17" x1="0" y1="0" x2="1" y2="0"><stop offset="0" stop-color="#aab2c0"/><stop offset="0.45" stop-color="#f4f6fa"/><stop offset="1" stop-color="#6c7686"/></linearGradient></defs><g transform="translate(0.5 1) scale(1.0)"><path d="M0.500 1.200l6 6.800v5.500l2.800 1.500v-7l6.200-6.800z" fill="url(#g17)" stroke="#6c7686" stroke-width="0.700" stroke-linejoin="round"/><ellipse cx="8" cy="1.300" rx="7.600" ry="1.300" fill="#aab2c0" stroke="#6c7686" stroke-width="0.700"/><ellipse cx="8" cy="1.300" rx="5.500" ry="0.600" fill="#f4f6fa"/></g></svg></div><div class="t ms" style="left:28px;top:4px">Task List - Filters</div><div class="a" style="left:165px;top:4px;"><svg width="12" height="12" viewBox="0 0 12 12" style="display:block;"><rect x="0.500" y="0.500" width="11" height="11" rx="1.500" fill="#2A64DC" stroke="#1A48B4"/><rect x="2.800" y="3.300" width="6.400" height="5.600" fill="#5C8CF0" stroke="#fff" stroke-width="1.300"/><path d="M2.200 3h7.600" stroke="#fff" stroke-width="1.200"/></svg></div><div class="a" style="left:181px;top:4px;"><svg width="12" height="13" viewBox="0 0 12 13" style="display:block;"><rect x="4.300" y="2" width="3.400" height="4.500" fill="#8CB8F4"/><path d="M2.500 1.600h7M3.800 2v4.800M8.200 2v4.800M1.200 7.300h9.600M6 8v5" stroke="#1E40B0" stroke-width="1.500" fill="none"/></svg></div><div class="a pb cl" style="left:197px;top:4px"><svg width="10" height="10" viewBox="0 0 10 10" style="display:block;"><path d="M2 2l6 6M8 2l-6 6" stroke="#fff" stroke-width="1.800"/></svg></div></div><div class="a tbar" style="left:1px;top:511px;width:215px;height:28px"><div class="a grip" style="left:4px;top:6px;height:18px"></div><div class="a" style="left:11px;top:5px;width:81px;height:19px;background:#fff"><div class="t ms" style="left:2px;top:3px">Current</div><div class="a cb" style="left:65px;top:1px;height:17px"></div><svg class="a" style="left:69px;top:6px" width="9" height="9" viewBox="0 0 9 9"><path d="M0.800 1.200l3.700 3.600 3.700-3.600" stroke="#4D6185" stroke-width="2" fill="none"/></svg></div><div class="a" style="left:97px;top:5px;"><svg width="18" height="18" viewBox="0 0 18 18" style="display:block;"><defs><linearGradient id="g18" x1="0" y1="0" x2="1" y2="0"><stop offset="0" stop-color="#aab2c0"/><stop offset="0.45" stop-color="#F0F0F0"/><stop offset="1" stop-color="#B5B5B5"/></linearGradient></defs><g transform="translate(1 1) scale(1.0)"><path d="M0.500 1.200l6 6.800v5.500l2.800 1.500v-7l6.200-6.800z" fill="url(#g18)" stroke="#B5B5B5" stroke-width="0.700" stroke-linejoin="round"/><ellipse cx="8" cy="1.300" rx="7.600" ry="1.300" fill="#aab2c0" stroke="#B5B5B5" stroke-width="0.700"/><ellipse cx="8" cy="1.300" rx="5.500" ry="0.600" fill="#F0F0F0"/></g><rect x="8" y="9" width="6" height="7" rx="2" fill="#E4E4E4" stroke="#C0C0C0" transform="rotate(30 11 12)"/></svg></div><div class="a" style="left:121px;top:4px;"><svg width="18" height="19" viewBox="0 0 18 19" style="display:block;"><defs><linearGradient id="g19" x1="0" y1="0" x2="1" y2="0"><stop offset="0" stop-color="#aab2c0"/><stop offset="0.45" stop-color="#f4f6fa"/><stop offset="1" stop-color="#8e939b"/></linearGradient></defs><g transform="translate(2 0) scale(0.9)"><path d="M0.500 1.200l6 6.800v5.500l2.800 1.500v-7l6.200-6.800z" fill="url(#g19)" stroke="#8e939b" stroke-width="0.700" stroke-linejoin="round"/><ellipse cx="8" cy="1.300" rx="7.600" ry="1.300" fill="#aab2c0" stroke="#8e939b" stroke-width="0.700"/><ellipse cx="8" cy="1.300" rx="5.500" ry="0.600" fill="#f4f6fa"/></g><rect x="6" y="9" width="9" height="9" fill="#444"/><rect x="7.500" y="9" width="6" height="3.500" fill="#fff"/><rect x="7.500" y="14" width="6" height="4" fill="#e03030"/></svg></div><div class="a arr" style="left:140px;top:12px;border-top-color:#000"></div><div class="a" style="left:154px;top:5px;"><svg width="18" height="18" viewBox="0 0 18 18" style="display:block;"><defs><linearGradient id="g20" x1="0" y1="0" x2="1" y2="0"><stop offset="0" stop-color="#aab2c0"/><stop offset="0.45" stop-color="#F0F0F0"/><stop offset="1" stop-color="#B5B5B5"/></linearGradient></defs><g transform="translate(1 1) scale(1.0)"><path d="M0.500 1.200l6 6.800v5.500l2.800 1.500v-7l6.200-6.800z" fill="url(#g20)" stroke="#B5B5B5" stroke-width="0.700" stroke-linejoin="round"/><ellipse cx="8" cy="1.300" rx="7.600" ry="1.300" fill="#aab2c0" stroke="#B5B5B5" stroke-width="0.700"/><ellipse cx="8" cy="1.300" rx="5.500" ry="0.600" fill="#F0F0F0"/></g><path d="M9 10l6 6M15 10l-6 6" stroke="#B0B0B0" stroke-width="2.500"/></svg></div><div class="a pressed" style="left:174px;top:3px;width:24px;height:24px"></div><div class="a" style="left:178px;top:6px;"><svg width="18" height="18" viewBox="0 0 18 18" style="display:block;"><defs><linearGradient id="g21" x1="0" y1="0" x2="1" y2="0"><stop offset="0" stop-color="#aab2c0"/><stop offset="0.45" stop-color="#f4f6fa"/><stop offset="1" stop-color="#7a8088"/></linearGradient></defs><g transform="translate(0 0) scale(1.0)"><path d="M0.500 1.200l6 6.800v5.500l2.800 1.500v-7l6.200-6.800z" fill="url(#g21)" stroke="#7a8088" stroke-width="0.700" stroke-linejoin="round"/><ellipse cx="8" cy="1.300" rx="7.600" ry="1.300" fill="#aab2c0" stroke="#7a8088" stroke-width="0.700"/><ellipse cx="8" cy="1.300" rx="5.500" ry="0.600" fill="#f4f6fa"/></g><rect x="9" y="6" width="7" height="11" rx="1" fill="#9aa0a8" stroke="#555"/><rect x="11" y="8" width="3" height="7" fill="#e8e8e8" stroke="#666" stroke-width="0.600"/></svg></div><div class="a arr" style="left:201px;top:20px;border-top-color:#000"></div></div><div class="a" style="left:1px;top:540px;width:215px;height:197px;border:1px solid #7F9DB9;background:#ECE9D8;overflow:hidden"><div class="a" style="left:0;top:19px;width:196px;height:1px;background:repeating-linear-gradient(to right,#ACA899 0,#ACA899 1px,transparent 1px,transparent 2px)"></div><div class="a" style="left:4px;top:5px;width:9px;height:9px;border:1px solid #8C9CB4;border-radius:1px;background:linear-gradient(135deg,#fff 45%,#D8D4C4)"><div class="a" style="left:1px;top:3px;width:5px;height:1px;background:#000"></div></div><div class="t" style="left:18px;top:3px;font:bold 11.500px 'Liberation Sans',sans-serif;line-height:15px">Common</div><div class="a" style="left:0;top:38px;width:196px;height:1px;background:repeating-linear-gradient(to right,#ACA899 0,#ACA899 1px,transparent 1px,transparent 2px)"></div><div class="t ms" style="left:31px;top:23px">Name</div><div class="a" style="left:125px;top:20px;width:1px;height:19px;background:#ACA899"></div><div class="a" style="left:0;top:57px;width:196px;height:1px;background:repeating-linear-gradient(to right,#ACA899 0,#ACA899 1px,transparent 1px,transparent 2px)"></div><div class="t ms" style="left:31px;top:42px">ID</div><div class="a" style="left:125px;top:39px;width:1px;height:19px;background:#ACA899"></div><div class="a" style="left:0;top:76px;width:196px;height:1px;background:repeating-linear-gradient(to right,#ACA899 0,#ACA899 1px,transparent 1px,transparent 2px)"></div><div class="t ms" style="left:31px;top:61px">Status</div><div class="a" style="left:125px;top:58px;width:1px;height:19px;background:#ACA899"></div><div class="a cb" style="left:177px;top:59px;width:17px;height:15px"></div><svg class="a" style="left:181px;top:63px" width="9" height="9" viewBox="0 0 9 9"><path d="M0.800 1.200l3.700 3.600 3.700-3.600" stroke="#4D6185" stroke-width="2" fill="none"/></svg><div class="a" style="left:0;top:95px;width:196px;height:1px;background:repeating-linear-gradient(to right,#ACA899 0,#ACA899 1px,transparent 1px,transparent 2px)"></div><div class="t ms" style="left:31px;top:80px">Priority</div><div class="a" style="left:125px;top:77px;width:1px;height:19px;background:#ACA899"></div><div class="a cb" style="left:177px;top:78px;width:17px;height:15px"></div><svg class="a" style="left:181px;top:82px" width="9" height="9" viewBox="0 0 9 9"><path d="M0.800 1.200l3.700 3.600 3.700-3.600" stroke="#4D6185" stroke-width="2" fill="none"/></svg><div class="a" style="left:0;top:114px;width:196px;height:1px;background:repeating-linear-gradient(to right,#ACA899 0,#ACA899 1px,transparent 1px,transparent 2px)"></div><div class="t ms" style="left:31px;top:99px">Actual Time</div><div class="a" style="left:125px;top:96px;width:1px;height:19px;background:#ACA899"></div><div class="a cb" style="left:177px;top:97px;width:17px;height:15px"></div><svg class="a" style="left:181px;top:101px" width="9" height="9" viewBox="0 0 9 9"><path d="M0.800 1.200l3.700 3.600 3.700-3.600" stroke="#4D6185" stroke-width="2" fill="none"/></svg><div class="a" style="left:0;top:133px;width:196px;height:1px;background:repeating-linear-gradient(to right,#ACA899 0,#ACA899 1px,transparent 1px,transparent 2px)"></div><div class="t ms" style="left:31px;top:118px">Estimated Time</div><div class="a" style="left:125px;top:115px;width:1px;height:19px;background:#ACA899"></div><div class="a cb" style="left:177px;top:116px;width:17px;height:15px"></div><svg class="a" style="left:181px;top:120px" width="9" height="9" viewBox="0 0 9 9"><path d="M0.800 1.200l3.700 3.600 3.700-3.600" stroke="#4D6185" stroke-width="2" fill="none"/></svg><div class="a" style="left:0;top:152px;width:196px;height:1px;background:repeating-linear-gradient(to right,#ACA899 0,#ACA899 1px,transparent 1px,transparent 2px)"></div><div class="a" style="left:4px;top:138px;width:9px;height:9px;border:1px solid #8C9CB4;border-radius:1px;background:linear-gradient(135deg,#fff 45%,#D8D4C4)"><div class="a" style="left:1px;top:3px;width:5px;height:1px;background:#000"></div></div><div class="t" style="left:18px;top:136px;font:bold 11.500px 'Liberation Sans',sans-serif;line-height:15px">By Date</div><div class="a" style="left:0;top:171px;width:196px;height:1px;background:repeating-linear-gradient(to right,#ACA899 0,#ACA899 1px,transparent 1px,transparent 2px)"></div><div class="t ms" style="left:31px;top:156px">Date Range</div><div class="a" style="left:125px;top:153px;width:1px;height:19px;background:#ACA899"></div><div class="a cb" style="left:177px;top:154px;width:17px;height:15px"></div><svg class="a" style="left:181px;top:158px" width="9" height="9" viewBox="0 0 9 9"><path d="M0.800 1.200l3.700 3.600 3.700-3.600" stroke="#4D6185" stroke-width="2" fill="none"/></svg><div class="a" style="left:0;top:190px;width:196px;height:1px;background:repeating-linear-gradient(to right,#ACA899 0,#ACA899 1px,transparent 1px,transparent 2px)"></div><div class="t ms" style="left:31px;top:175px">Date Created</div><div class="a" style="left:125px;top:172px;width:1px;height:19px;background:#ACA899"></div><div class="a cb" style="left:177px;top:173px;width:17px;height:15px"></div><svg class="a" style="left:181px;top:177px" width="9" height="9" viewBox="0 0 9 9"><path d="M0.800 1.200l3.700 3.600 3.700-3.600" stroke="#4D6185" stroke-width="2" fill="none"/></svg><div class="a" style="left:0;top:209px;width:196px;height:1px;background:repeating-linear-gradient(to right,#ACA899 0,#ACA899 1px,transparent 1px,transparent 2px)"></div><div class="t ms" style="left:31px;top:194px">Date Last Modified</div><div class="a" style="left:125px;top:191px;width:1px;height:19px;background:#ACA899"></div><div class="a cb" style="left:177px;top:192px;width:17px;height:15px"></div><svg class="a" style="left:181px;top:196px" width="9" height="9" viewBox="0 0 9 9"><path d="M0.800 1.200l3.700 3.600 3.700-3.600" stroke="#4D6185" stroke-width="2" fill="none"/></svg><div class="a sb" style="left:197px;top:0px;width:16px;height:195px"><div class="a sbtn" style="left:1px;top:0;width:14px;height:16px"></div><svg class="a" style="left:3px;top:4px" width="9" height="9" viewBox="0 0 9 9"><path d="M0.800 5.800l3.700-3.600 3.700 3.600" stroke="#4D6185" stroke-width="2" fill="none"/></svg><div class="a sbtn" style="left:1px;top:179px;width:14px;height:16px"></div><svg class="a" style="left:3px;top:183px" width="9" height="9" viewBox="0 0 9 9"><path d="M0.800 1.200l3.700 3.600 3.700-3.600" stroke="#4D6185" stroke-width="2" fill="none"/></svg><div class="a sthumb" style="left:1px;top:17px;width:14px;height:54px"></div><div class="a" style="left:4px;top:40px;width:6px;height:8px;background:repeating-linear-gradient(to bottom,#EEF4FE 0,#EEF4FE 1px,#8CB0F8 1px,#8CB0F8 2px)"></div></div></div><div class="a" style="left:218px;top:99px;width:1055px;height:3px;background:#FDFDFB"></div><div class="a" style="left:218px;top:102px;width:1055px;height:39px;border:1px solid #ACA899;background:#ECE9D8"></div><div class="a" style="left:220px;top:104px;width:1051px;height:36px;background:#ACA899"><div class="a" style="left:6px;top:5px;width:13px;height:13px;border:1px solid #1C5180;background:linear-gradient(135deg,#DCDCD7,#FFFFFF)"></div><div class="t" style="left:21px;top:5px;color:#fff;text-shadow:0 0 0 rgba(255,255,255,.5)">Current filter:</div><div class="t" style="left:146px;top:5px;color:#fff;text-shadow:0 0 0 rgba(255,255,255,.5);white-space:pre;letter-spacing:0.150px">(Task Group  (Plans,By Products,By Areas,By Customers))</div></div><div class="a" style="left:218px;top:144px;width:1055px;height:595px;border:1px solid #7F9DB9;background:#fff;overflow:hidden"><div class="a" style="left:0;top:0;width:1054px;height:35px;background:#ACA899"><div class="t" style="left:7px;top:11px;color:#E4E2D6;text-shadow:none">Drag a column header here to group by that column</div></div><div class="a hdr" style="left:0;top:35px;width:1036px;height:19px"><div class="hc" style="left:0px;width:41px;">ID</div><div class="hc" style="left:41px;width:133px;">Name</div><div class="hc" style="left:174px;width:119px;padding-right:16px;">Status</div><div class="fb" style="left:275px;top:3px"></div><svg class="a" style="left:278px;top:6px" width="9" height="9" viewBox="0 0 9 9"><path d="M0.800 1.200l3.700 3.600 3.700-3.600" stroke="#4D6185" stroke-width="2" fill="none"/></svg><div class="hc" style="left:293px;width:69px;">Complete</div><div class="hc" style="left:362px;width:86px;padding-right:16px;">Priority</div><div class="fb" style="left:430px;top:3px"></div><svg class="a" style="left:433px;top:6px" width="9" height="9" viewBox="0 0 9 9"><path d="M0.800 1.200l3.700 3.600 3.700-3.600" stroke="#4D6185" stroke-width="2" fill="none"/></svg><div class="hc" style="left:448px;width:82px;padding-right:16px;">Owner</div><div class="fb" style="left:512px;top:3px"></div><svg class="a" style="left:515px;top:6px" width="9" height="9" viewBox="0 0 9 9"><path d="M0.800 1.200l3.700 3.600 3.700-3.600" stroke="#4D6185" stroke-width="2" fill="none"/></svg><div class="hc" style="left:530px;width:150px;padding-right:16px;">Assigned</div><div class="fb" style="left:662px;top:3px"></div><svg class="a" style="left:665px;top:6px" width="9" height="9" viewBox="0 0 9 9"><path d="M0.800 1.200l3.700 3.600 3.700-3.600" stroke="#4D6185" stroke-width="2" fill="none"/></svg><div class="hc" style="left:680px;width:101px;padding-right:18px;text-align:left;padding-left:4px;">ate Last Modifie</div><div class="fb" style="left:763px;top:3px"></div><svg class="a" style="left:766px;top:6px" width="9" height="9" viewBox="0 0 9 9"><path d="M0.800 1.200l3.700 3.600 3.700-3.600" stroke="#4D6185" stroke-width="2" fill="none"/></svg><div class="hc" style="left:781px;width:68px;">Price</div><div class="hc" style="left:849px;width:93px;padding-right:16px;">Customer</div><div class="fb" style="left:924px;top:3px"></div><svg class="a" style="left:927px;top:6px" width="9" height="9" viewBox="0 0 9 9"><path d="M0.800 1.200l3.700 3.600 3.700-3.600" stroke="#4D6185" stroke-width="2" fill="none"/></svg><div class="hc" style="left:942px;width:94px;padding-right:16px;">Country</div><div class="fb" style="left:1018px;top:3px"></div><svg class="a" style="left:1021px;top:6px" width="9" height="9" viewBox="0 0 9 9"><path d="M0.800 1.200l3.700 3.600 3.700-3.600" stroke="#4D6185" stroke-width="2" fill="none"/></svg></div><div class="a" style="left:0;top:54px;width:1036px;height:513px;overflow:hidden"><div class="row" style="top:0px;width:1036px"><div class="c" style="left:0px;width:41px;text-align:right;padding-right:3px">92</div><div class="c" style="left:41px;width:133px;padding-left:1px">Prepare Solution</div><div class="c" style="left:174px;width:119px;"><div class="a" style="left:2px;top:2px"><svg width="18" height="18" viewBox="0 0 18 18" style="display:block;"><defs><linearGradient id="g22" x1="0" y1="0" x2="1" y2="1"><stop offset="0" stop-color="#ffffff"/><stop offset="1" stop-color="#dcdcdc"/></linearGradient></defs><rect x="7.9" y="1.4" width="10" height="13" fill="#bdbdbd"/><rect x="7" y="0.5" width="10" height="13" fill="url(#g22)" stroke="#d0d0d0" stroke-width="0.6"/><path d="M1.500 7.500l8.500 3.800-8.500 4.200 2-4z" fill="#5a88f0" stroke="#2456d4" stroke-width="0.900" stroke-linejoin="round"/></svg></div><span style="position:absolute;left:23px">In Progress</span></div><div class="c" style="left:293px;width:69px;"><div class="bar" style="width:29px"></div><div class="a" style="left:31px;top:0;width:35px;height:21px;overflow:hidden"><div style="width:64px;margin-left:-29px;text-align:center;color:#000">45 %</div></div><div class="a" style="left:2px;top:0;width:29px;height:21px;overflow:hidden"><div style="width:64px;text-align:center;color:#DC3CD4;line-height:22px">45 %</div></div></div><div class="c" style="left:362px;width:86px;"><div class="a" style="left:3px;top:2px"><svg width="16" height="16" viewBox="0 0 16 16" style="display:block;"><defs><radialGradient id="g23" cx="0.5" cy="0.72" r="0.7"><stop offset="0" stop-color="#22f422"/><stop offset="0.55" stop-color="#10b414"/><stop offset="1" stop-color="#06640a"/></radialGradient><linearGradient id="g24" x1="0" y1="0" x2="0" y2="1"><stop offset="0" stop-color="#ffffff" stop-opacity="0.95"/><stop offset="1" stop-color="#ffffff" stop-opacity="0.1"/></linearGradient></defs><circle cx="8" cy="8" r="7.300" fill="url(#g23)" stroke="#075c0c" stroke-width="1.100"/><ellipse cx="8" cy="4.800" rx="4.600" ry="3" fill="url(#g24)"/></svg></div><span style="position:absolute;left:23px">Normal</span></div><div class="c" style="left:448px;width:82px;padding-left:2px;line-height:20px">Administrator</div><div class="c" style="left:530px;width:150px;padding-left:3px">Administrator</div><div class="c" style="left:680px;width:101px;padding-left:3px;letter-spacing:0.200px">7/20/2010 1:17 PM</div><div class="c" style="left:781px;width:68px;text-align:right;padding-right:2px"></div><div class="c" style="left:849px;width:93px;padding-left:3px">Customer 3</div><div class="c" style="left:942px;width:94px;padding-left:3px"></div></div><div class="row sel" style="top:22px;width:1036px"><div class="c" style="left:0px;width:41px;text-align:right;padding-right:3px">181</div><div class="c" style="left:41px;width:133px;padding-left:1px">Receive Payment</div><div class="c" style="left:174px;width:119px;"><div class="a" style="left:2px;top:2px"><svg width="18" height="18" viewBox="0 0 18 18" style="display:block;"><defs><linearGradient id="g25" x1="0" y1="0" x2="1" y2="1"><stop offset="0" stop-color="#ffffff"/><stop offset="1" stop-color="#dcdcdc"/></linearGradient></defs><rect x="7.9" y="1.4" width="10" height="13" fill="#bdbdbd"/><rect x="7" y="0.5" width="10" height="13" fill="url(#g25)" stroke="#d0d0d0" stroke-width="0.6"/><path d="M1.500 11l1.200-1 3.300 3 7.500-6 0.800 1.300-8.300 8z" fill="#2aa832" stroke="#1a8a24" stroke-width="0.500"/></svg></div><span style="position:absolute;left:23px">Completed</span></div><div class="c" style="left:293px;width:69px;"><div class="bar" style="width:64px"></div><div class="a" style="left:2px;top:0;width:64px;height:21px;overflow:hidden"><div style="width:64px;text-align:center;color:#DC3CD4;line-height:22px">100 %</div></div></div><div class="c" style="left:362px;width:86px;"><div class="a" style="left:3px;top:2px"><svg width="16" height="16" viewBox="0 0 16 16" style="display:block;"><defs><linearGradient id="g26" x1="0" y1="0" x2="0" y2="1"><stop offset="0" stop-color="#ffffff"/><stop offset="0.12" stop-color="#f8c8cc"/><stop offset="0.45" stop-color="#e0142c"/><stop offset="1" stop-color="#c20a20"/></linearGradient></defs><rect x="0.500" y="0.500" width="15" height="15" rx="1.800" fill="url(#g26)" stroke="#a80c1c"/><path d="M4.200 7.600l3.800-3.100 3.800 3.100M4.200 11.800l3.800-3.100 3.800 3.100" stroke="#fff" stroke-width="1.500" fill="none"/></svg></div><span style="position:absolute;left:23px">Highest</span></div><div class="c" style="left:448px;width:82px;padding-left:2px;line-height:20px">Administrator</div><div class="c" style="left:530px;width:150px;padding-left:3px">John Smith</div><div class="c" style="left:680px;width:101px;padding-left:3px;letter-spacing:0.200px">7/20/2010 1:22 PM</div><div class="c" style="left:781px;width:68px;text-align:right;padding-right:2px"></div><div class="c" style="left:849px;width:93px;padding-left:3px"></div><div class="c" style="left:942px;width:94px;padding-left:3px"></div></div><div class="row" style="top:44px;width:1036px"><div class="c" style="left:0px;width:41px;text-align:right;padding-right:3px">303</div><div class="c" style="left:41px;width:133px;padding-left:1px">Task 1</div><div class="c" style="left:174px;width:119px;"><div class="a" style="left:2px;top:2px"><svg width="18" height="18" viewBox="0 0 18 18" style="display:block;"><defs><linearGradient id="g27" x1="0" y1="0" x2="1" y2="1"><stop offset="0" stop-color="#ffffff"/><stop offset="1" stop-color="#dcdcdc"/></linearGradient></defs><rect x="7.9" y="1.4" width="10" height="13" fill="#bdbdbd"/><rect x="7" y="0.5" width="10" height="13" fill="url(#g27)" stroke="#d0d0d0" stroke-width="0.6"/><path d="M1.500 7.500l8.500 3.800-8.500 4.200 2-4z" fill="#5a88f0" stroke="#2456d4" stroke-width="0.900" stroke-linejoin="round"/></svg></div><span style="position:absolute;left:23px">In Progress</span></div><div class="c" style="left:293px;width:69px;"><div class="bar" style="width:48px"></div><div class="a" style="left:50px;top:0;width:16px;height:21px;overflow:hidden"><div style="width:64px;margin-left:-48px;text-align:center;color:#000">75 %</div></div><div class="a" style="left:2px;top:0;width:48px;height:21px;overflow:hidden"><div style="width:64px;text-align:center;color:#DC3CD4;line-height:22px">75 %</div></div></div><div class="c" style="left:362px;width:86px;"><div class="a" style="left:3px;top:2px"><svg width="16" height="16" viewBox="0 0 16 16" style="display:block;"><defs><linearGradient id="g28" x1="0" y1="0" x2="0" y2="1"><stop offset="0" stop-color="#ffffff"/><stop offset="0.12" stop-color="#f8c8cc"/><stop offset="0.45" stop-color="#e0142c"/><stop offset="1" stop-color="#c20a20"/></linearGradient></defs><rect x="0.500" y="0.500" width="15" height="15" rx="1.800" fill="url(#g28)" stroke="#a80c1c"/><path d="M4.200 7.600l3.800-3.100 3.800 3.100M4.200 11.800l3.800-3.100 3.800 3.100" stroke="#fff" stroke-width="1.500" fill="none"/></svg></div><span style="position:absolute;left:23px">Highest</span></div><div class="c" style="left:448px;width:82px;padding-left:2px;line-height:20px">Administrator</div><div class="c" style="left:530px;width:150px;padding-left:3px">Kate Stewart</div><div class="c" style="left:680px;width:101px;padding-left:3px;letter-spacing:0.200px">7/20/2010 1:22 PM</div><div class="c" style="left:781px;width:68px;text-align:right;padding-right:2px"></div><div class="c" style="left:849px;width:93px;padding-left:3px">Customer 1</div><div class="c" style="left:942px;width:94px;padding-left:3px"></div></div><div class="row" style="top:66px;width:1036px"><div class="c" style="left:0px;width:41px;text-align:right;padding-right:3px">304</div><div class="c" style="left:41px;width:133px;padding-left:1px">Define Needs</div><div class="c" style="left:174px;width:119px;"><div class="a" style="left:2px;top:2px"><svg width="18" height="18" viewBox="0 0 18 18" style="display:block;"><defs><linearGradient id="g29" x1="0" y1="0" x2="1" y2="1"><stop offset="0" stop-color="#ffffff"/><stop offset="1" stop-color="#dcdcdc"/></linearGradient></defs><rect x="7.9" y="1.4" width="10" height="13" fill="#bdbdbd"/><rect x="7" y="0.5" width="10" height="13" fill="url(#g29)" stroke="#d0d0d0" stroke-width="0.6"/><path d="M1.500 11l1.200-1 3.300 3 7.500-6 0.800 1.300-8.300 8z" fill="#2aa832" stroke="#1a8a24" stroke-width="0.500"/></svg></div><span style="position:absolute;left:23px">Completed</span></div><div class="c" style="left:293px;width:69px;"><div class="bar" style="width:64px"></div><div class="a" style="left:2px;top:0;width:64px;height:21px;overflow:hidden"><div style="width:64px;text-align:center;color:#DC3CD4;line-height:22px">100 %</div></div></div><div class="c" style="left:362px;width:86px;"><div class="a" style="left:3px;top:2px"><svg width="16" height="16" viewBox="0 0 16 16" style="display:block;"><defs><radialGradient id="g30" cx="0.5" cy="0.72" r="0.7"><stop offset="0" stop-color="#22f422"/><stop offset="0.55" stop-color="#10b414"/><stop offset="1" stop-color="#06640a"/></radialGradient><linearGradient id="g31" x1="0" y1="0" x2="0" y2="1"><stop offset="0" stop-color="#ffffff" stop-opacity="0.95"/><stop offset="1" stop-color="#ffffff" stop-opacity="0.1"/></linearGradient></defs><circle cx="8" cy="8" r="7.300" fill="url(#g30)" stroke="#075c0c" stroke-width="1.100"/><ellipse cx="8" cy="4.800" rx="4.600" ry="3" fill="url(#g31)"/></svg></div><span style="position:absolute;left:23px">Normal</span></div><div class="c" style="left:448px;width:82px;padding-left:2px;line-height:20px">Administrator</div><div class="c" style="left:530px;width:150px;padding-left:3px">Jennifer Lay</div><div class="c" style="left:680px;width:101px;padding-left:3px;letter-spacing:0.200px">7/20/2010 1:20 PM</div><div class="c" style="left:781px;width:68px;text-align:right;padding-right:2px"></div><div class="c" style="left:849px;width:93px;padding-left:3px">Customer 2</div><div class="c" style="left:942px;width:94px;padding-left:3px"></div></div><div class="row" style="top:88px;width:1036px"><div class="c" style="left:0px;width:41px;text-align:right;padding-right:3px">305</div><div class="c" style="left:41px;width:133px;padding-left:1px">Task 2</div><div class="c" style="left:174px;width:119px;"><div class="a" style="left:2px;top:2px"><svg width="18" height="18" viewBox="0 0 18 18" style="display:block;"><defs><linearGradient id="g32" x1="0" y1="0" x2="1" y2="1"><stop offset="0" stop-color="#ffffff"/><stop offset="1" stop-color="#dcdcdc"/></linearGradient></defs><rect x="7.9" y="1.4" width="10" height="13" fill="#bdbdbd"/><rect x="7" y="0.5" width="10" height="13" fill="url(#g32)" stroke="#d0d0d0" stroke-width="0.6"/><path d="M1.500 7.500l8.500 3.800-8.500 4.200 2-4z" fill="#5a88f0" stroke="#2456d4" stroke-width="0.900" stroke-linejoin="round"/></svg></div><span style="position:absolute;left:23px">In Progress</span></div><div class="c" style="left:293px;width:69px;"><div class="bar" style="width:16px"></div><div class="a" style="left:18px;top:0;width:48px;height:21px;overflow:hidden"><div style="width:64px;margin-left:-16px;text-align:center;color:#000">25 %</div></div><div class="a" style="left:2px;top:0;width:16px;height:21px;overflow:hidden"><div style="width:64px;text-align:center;color:#DC3CD4;line-height:22px">25 %</div></div></div><div class="c" style="left:362px;width:86px;"><div class="a" style="left:3px;top:2px"><svg width="16" height="16" viewBox="0 0 16 16" style="display:block;"><defs><radialGradient id="g33" cx="0.5" cy="0.72" r="0.7"><stop offset="0" stop-color="#22f422"/><stop offset="0.55" stop-color="#10b414"/><stop offset="1" stop-color="#06640a"/></radialGradient><linearGradient id="g34" x1="0" y1="0" x2="0" y2="1"><stop offset="0" stop-color="#ffffff" stop-opacity="0.95"/><stop offset="1" stop-color="#ffffff" stop-opacity="0.1"/></linearGradient></defs><circle cx="8" cy="8" r="7.300" fill="url(#g33)" stroke="#075c0c" stroke-width="1.100"/><ellipse cx="8" cy="4.800" rx="4.600" ry="3" fill="url(#g34)"/></svg></div><span style="position:absolute;left:23px">Normal</span></div><div class="c" style="left:448px;width:82px;padding-left:2px;line-height:20px">Administrator</div><div class="c" style="left:530px;width:150px;padding-left:3px">Administrator,Peter Brown</div><div class="c" style="left:680px;width:101px;padding-left:3px;letter-spacing:0.200px">7/20/2010 1:20 PM</div><div class="c" style="left:781px;width:68px;text-align:right;padding-right:2px"></div><div class="c" style="left:849px;width:93px;padding-left:3px">Customer 2</div><div class="c" style="left:942px;width:94px;padding-left:3px"></div></div><div class="row" style="top:110px;width:1036px"><div class="c" style="left:0px;width:41px;text-align:right;padding-right:3px">306</div><div class="c" style="left:41px;width:133px;padding-left:1px">Task 3</div><div class="c" style="left:174px;width:119px;"><div class="a" style="left:2px;top:2px"><svg width="18" height="18" viewBox="0 0 18 18" style="display:block;"><defs><linearGradient id="g35" x1="0" y1="0" x2="1" y2="1"><stop offset="0" stop-color="#ffffff"/><stop offset="1" stop-color="#dcdcdc"/></linearGradient></defs><rect x="7.9" y="1.4" width="10" height="13" fill="#bdbdbd"/><rect x="7" y="0.5" width="10" height="13" fill="url(#g35)" stroke="#d0d0d0" stroke-width="0.6"/><path d="M1.500 7.500l8.500 3.800-8.500 4.200 2-4z" fill="#5a88f0" stroke="#2456d4" stroke-width="0.900" stroke-linejoin="round"/></svg></div><span style="position:absolute;left:23px">In Progress</span></div><div class="c" style="left:293px;width:69px;"><div class="bar" style="width:13px"></div><div class="a" style="left:15px;top:0;width:51px;height:21px;overflow:hidden"><div style="width:64px;margin-left:-13px;text-align:center;color:#000">20 %</div></div><div class="a" style="left:2px;top:0;width:13px;height:21px;overflow:hidden"><div style="width:64px;text-align:center;color:#DC3CD4;line-height:22px">20 %</div></div></div><div class="c" style="left:362px;width:86px;"><div class="a" style="left:3px;top:2px"><svg width="16" height="16" viewBox="0 0 16 16" style="display:block;"><path d="M8 0.800l7.200 7.200-7.200 7.200-7.200-7.200z" fill="#ffdc80" stroke="#e8921e" stroke-width="1.200"/><path d="M8 3.800v5.400" stroke="#3a2a10" stroke-width="1.900"/><circle cx="8" cy="11.400" r="1.100" fill="#3a2a10"/></svg></div><span style="position:absolute;left:23px">Urgent</span></div><div class="c" style="left:448px;width:82px;padding-left:2px;line-height:20px">Administrator</div><div class="c" style="left:530px;width:150px;padding-left:3px">John Smith,Jennifer Lay</div><div class="c" style="left:680px;width:101px;padding-left:3px;letter-spacing:0.200px">7/20/2010 1:20 PM</div><div class="c" style="left:781px;width:68px;text-align:right;padding-right:2px"></div><div class="c" style="left:849px;width:93px;padding-left:3px">Customer 3</div><div class="c" style="left:942px;width:94px;padding-left:3px"></div></div><div class="row" style="top:132px;width:1036px"><div class="c" style="left:0px;width:41px;text-align:right;padding-right:3px">310</div><div class="c" style="left:41px;width:133px;padding-left:1px">Pos 1</div><div class="c" style="left:174px;width:119px;"><div class="a" style="left:2px;top:2px"><svg width="18" height="18" viewBox="0 0 18 18" style="display:block;"><defs><linearGradient id="g37" x1="0" y1="0" x2="1" y2="1"><stop offset="0" stop-color="#ffffff"/><stop offset="1" stop-color="#dcdcdc"/></linearGradient></defs><rect x="7.9" y="1.4" width="10" height="13" fill="#bdbdbd"/><rect x="7" y="0.5" width="10" height="13" fill="url(#g37)" stroke="#d0d0d0" stroke-width="0.6"/><defs><radialGradient id="g36"><stop offset="0" stop-color="#fff200"/><stop offset="0.55" stop-color="#ffc81e"/><stop offset="1" stop-color="#f7941d"/></radialGradient></defs><path d="M7.50 3.80L8.84 6.97L12.03 5.67L10.73 8.86L13.90 10.20L10.73 11.54L12.03 14.73L8.84 13.43L7.50 16.60L6.16 13.43L2.97 14.73L4.27 11.54L1.10 10.20L4.27 8.86L2.97 5.67L6.16 6.97z" fill="url(#g36)" stroke="#f58a1c" stroke-width="0.600" stroke-linejoin="round"/></svg></div><span style="position:absolute;left:23px">Created</span></div><div class="c" style="left:293px;width:69px;"><div class="a" style="left:2px;top:0;width:64px;height:21px;overflow:hidden"><div style="width:64px;margin-left:-0px;text-align:center;color:#000">0 %</div></div></div><div class="c" style="left:362px;width:86px;"><div class="a" style="left:3px;top:2px"><svg width="16" height="16" viewBox="0 0 16 16" style="display:block;"><defs><radialGradient id="g38" cx="0.5" cy="0.72" r="0.7"><stop offset="0" stop-color="#22f422"/><stop offset="0.55" stop-color="#10b414"/><stop offset="1" stop-color="#06640a"/></radialGradient><linearGradient id="g39" x1="0" y1="0" x2="0" y2="1"><stop offset="0" stop-color="#ffffff" stop-opacity="0.95"/><stop offset="1" stop-color="#ffffff" stop-opacity="0.1"/></linearGradient></defs><circle cx="8" cy="8" r="7.300" fill="url(#g38)" stroke="#075c0c" stroke-width="1.100"/><ellipse cx="8" cy="4.800" rx="4.600" ry="3" fill="url(#g39)"/></svg></div><span style="position:absolute;left:23px">Normal</span></div><div class="c" style="left:448px;width:82px;padding-left:2px;line-height:20px">Administrator</div><div class="c" style="left:530px;width:150px;padding-left:3px">Administrator,Kate Stewart</div><div class="c" style="left:680px;width:101px;padding-left:3px;letter-spacing:0.200px">7/20/2010 1:25 PM</div><div class="c" style="left:781px;width:68px;text-align:right;padding-right:2px">12.25</div><div class="c" style="left:849px;width:93px;padding-left:3px">Customer 1</div><div class="c" style="left:942px;width:94px;padding-left:3px"></div></div><div class="row" style="top:154px;width:1036px"><div class="c" style="left:0px;width:41px;text-align:right;padding-right:3px">318</div><div class="c" style="left:41px;width:133px;padding-left:1px">Present Solution</div><div class="c" style="left:174px;width:119px;"><div class="a" style="left:2px;top:2px"><svg width="18" height="18" viewBox="0 0 18 18" style="display:block;"><defs><linearGradient id="g40" x1="0" y1="0" x2="1" y2="1"><stop offset="0" stop-color="#ffffff"/><stop offset="1" stop-color="#dcdcdc"/></linearGradient></defs><rect x="7.9" y="1.4" width="10" height="13" fill="#bdbdbd"/><rect x="7" y="0.5" width="10" height="13" fill="url(#g40)" stroke="#d0d0d0" stroke-width="0.6"/><path d="M1.500 7.500l8.500 3.800-8.500 4.200 2-4z" fill="#5a88f0" stroke="#2456d4" stroke-width="0.900" stroke-linejoin="round"/></svg></div><span style="position:absolute;left:23px">In Progress</span></div><div class="c" style="left:293px;width:69px;"><div class="bar" style="width:16px"></div><div class="a" style="left:18px;top:0;width:48px;height:21px;overflow:hidden"><div style="width:64px;margin-left:-16px;text-align:center;color:#000">25 %</div></div><div class="a" style="left:2px;top:0;width:16px;height:21px;overflow:hidden"><div style="width:64px;text-align:center;color:#DC3CD4;line-height:22px">25 %</div></div></div><div class="c" style="left:362px;width:86px;"><div class="a" style="left:3px;top:2px"><svg width="16" height="16" viewBox="0 0 16 16" style="display:block;"><defs><linearGradient id="g41" x1="0" y1="0" x2="0" y2="1"><stop offset="0" stop-color="#ffffff"/><stop offset="0.12" stop-color="#f8c8cc"/><stop offset="0.45" stop-color="#e0142c"/><stop offset="1" stop-color="#c20a20"/></linearGradient></defs><rect x="0.500" y="0.500" width="15" height="15" rx="1.800" fill="url(#g41)" stroke="#a80c1c"/><path d="M3.800 10.500l4.200-3.800 4.200 3.800" stroke="#fff" stroke-width="1.800" fill="none"/></svg></div><span style="position:absolute;left:23px">High</span></div><div class="c" style="left:448px;width:82px;padding-left:2px;line-height:20px">Administrator</div><div class="c" style="left:530px;width:150px;padding-left:3px">Peter Brown</div><div class="c" style="left:680px;width:101px;padding-left:3px;letter-spacing:0.200px">7/20/2010 1:22 PM</div><div class="c" style="left:781px;width:68px;text-align:right;padding-right:2px"></div><div class="c" style="left:849px;width:93px;padding-left:3px">Customer 1</div><div class="c" style="left:942px;width:94px;padding-left:3px"></div></div><div class="row" style="top:176px;width:1036px"><div class="c" style="left:0px;width:41px;text-align:right;padding-right:3px">321</div><div class="c" style="left:41px;width:133px;padding-left:1px">1</div><div class="c" style="left:174px;width:119px;"><div class="a" style="left:2px;top:2px"><svg width="18" height="18" viewBox="0 0 18 18" style="display:block;"><defs><linearGradient id="g42" x1="0" y1="0" x2="1" y2="1"><stop offset="0" stop-color="#ffffff"/><stop offset="1" stop-color="#dcdcdc"/></linearGradient></defs><rect x="7.9" y="1.4" width="10" height="13" fill="#bdbdbd"/><rect x="7" y="0.5" width="10" height="13" fill="url(#g42)" stroke="#d0d0d0" stroke-width="0.6"/><path d="M1.500 11l1.200-1 3.300 3 7.500-6 0.800 1.300-8.300 8z" fill="#2aa832" stroke="#1a8a24" stroke-width="0.500"/></svg></div><span style="position:absolute;left:23px">Completed</span></div><div class="c" style="left:293px;width:69px;"><div class="bar" style="width:64px"></div><div class="a" style="left:2px;top:0;width:64px;height:21px;overflow:hidden"><div style="width:64px;text-align:center;color:#DC3CD4;line-height:22px">100 %</div></div></div><div class="c" style="left:362px;width:86px;"><div class="a" style="left:3px;top:2px"><svg width="16" height="16" viewBox="0 0 16 16" style="display:block;"><defs><radialGradient id="g43" cx="0.5" cy="0.72" r="0.7"><stop offset="0" stop-color="#22f422"/><stop offset="0.55" stop-color="#10b414"/><stop offset="1" stop-color="#06640a"/></radialGradient><linearGradient id="g44" x1="0" y1="0" x2="0" y2="1"><stop offset="0" stop-color="#ffffff" stop-opacity="0.95"/><stop offset="1" stop-color="#ffffff" stop-opacity="0.1"/></linearGradient></defs><circle cx="8" cy="8" r="7.300" fill="url(#g43)" stroke="#075c0c" stroke-width="1.100"/><ellipse cx="8" cy="4.800" rx="4.600" ry="3" fill="url(#g44)"/></svg></div><span style="position:absolute;left:23px">Normal</span></div><div class="c" style="left:448px;width:82px;padding-left:2px;line-height:20px">Administrator</div><div class="c" style="left:530px;width:150px;padding-left:3px">Administrator</div><div class="c" style="left:680px;width:101px;padding-left:3px;letter-spacing:0.200px">7/20/2010 1:42 PM</div><div class="c" style="left:781px;width:68px;text-align:right;padding-right:2px"></div><div class="c" style="left:849px;width:93px;padding-left:3px"></div><div class="c" style="left:942px;width:94px;padding-left:3px"></div></div><div class="row" style="top:198px;width:1036px"><div class="c" style="left:0px;width:41px;text-align:right;padding-right:3px">322</div><div class="c" style="left:41px;width:133px;padding-left:1px">2</div><div class="c" style="left:174px;width:119px;"><div class="a" style="left:2px;top:2px"><svg width="18" height="18" viewBox="0 0 18 18" style="display:block;"><defs><linearGradient id="g45" x1="0" y1="0" x2="1" y2="1"><stop offset="0" stop-color="#ffffff"/><stop offset="1" stop-color="#dcdcdc"/></linearGradient></defs><rect x="7.9" y="1.4" width="10" height="13" fill="#bdbdbd"/><rect x="7" y="0.5" width="10" height="13" fill="url(#g45)" stroke="#d0d0d0" stroke-width="0.6"/><path d="M9.62 4.47L9.72 8.44L13.61 9.22L10.23 11.29L11.49 15.05L8.00 13.16L5.38 16.13L5.28 12.16L1.39 11.38L4.77 9.31L3.51 5.55L7.00 7.44z" fill="#3a2a9c" stroke="#3a2a9c" stroke-width="1.300" stroke-linejoin="round"/><path d="M5 6.500l1.500 2M11 6l-1.500 2" stroke="#9a8ee0" stroke-width="0.800"/></svg></div><span style="position:absolute;left:23px">Draft</span></div><div class="c" style="left:293px;width:69px;"><div class="a" style="left:2px;top:0;width:64px;height:21px;overflow:hidden"><div style="width:64px;margin-left:-0px;text-align:center;color:#000">0 %</div></div></div><div class="c" style="left:362px;width:86px;"><div class="a" style="left:3px;top:2px"><svg width="16" height="16" viewBox="0 0 16 16" style="display:block;"><defs><radialGradient id="g46" cx="0.5" cy="0.72" r="0.7"><stop offset="0" stop-color="#22f422"/><stop offset="0.55" stop-color="#10b414"/><stop offset="1" stop-color="#06640a"/></radialGradient><linearGradient id="g47" x1="0" y1="0" x2="0" y2="1"><stop offset="0" stop-color="#ffffff" stop-opacity="0.95"/><stop offset="1" stop-color="#ffffff" stop-opacity="0.1"/></linearGradient></defs><circle cx="8" cy="8" r="7.300" fill="url(#g46)" stroke="#075c0c" stroke-width="1.100"/><ellipse cx="8" cy="4.800" rx="4.600" ry="3" fill="url(#g47)"/></svg></div><span style="position:absolute;left:23px">Normal</span></div><div class="c" style="left:448px;width:82px;padding-left:2px;line-height:20px">Administrator</div><div class="c" style="left:530px;width:150px;padding-left:3px">John Smith</div><div class="c" style="left:680px;width:101px;padding-left:3px;letter-spacing:0.200px">7/20/2010 1:43 PM</div><div class="c" style="left:781px;width:68px;text-align:right;padding-right:2px"></div><div class="c" style="left:849px;width:93px;padding-left:3px"></div><div class="c" style="left:942px;width:94px;padding-left:3px"></div></div><div class="row" style="top:220px;width:1036px"><div class="c" style="left:0px;width:41px;text-align:right;padding-right:3px">323</div><div class="c" style="left:41px;width:133px;padding-left:1px">3</div><div class="c" style="left:174px;width:119px;"><div class="a" style="left:2px;top:2px"><svg width="18" height="18" viewBox="0 0 18 18" style="display:block;"><defs><linearGradient id="g48" x1="0" y1="0" x2="1" y2="1"><stop offset="0" stop-color="#ffffff"/><stop offset="1" stop-color="#dcdcdc"/></linearGradient></defs><rect x="7.9" y="1.4" width="10" height="13" fill="#bdbdbd"/><rect x="7" y="0.5" width="10" height="13" fill="url(#g48)" stroke="#d0d0d0" stroke-width="0.6"/><path d="M9.62 4.47L9.72 8.44L13.61 9.22L10.23 11.29L11.49 15.05L8.00 13.16L5.38 16.13L5.28 12.16L1.39 11.38L4.77 9.31L3.51 5.55L7.00 7.44z" fill="#3a2a9c" stroke="#3a2a9c" stroke-width="1.300" stroke-linejoin="round"/><path d="M5 6.500l1.500 2M11 6l-1.500 2" stroke="#9a8ee0" stroke-width="0.800"/></svg></div><span style="position:absolute;left:23px">Draft</span></div><div class="c" style="left:293px;width:69px;"><div class="a" style="left:2px;top:0;width:64px;height:21px;overflow:hidden"><div style="width:64px;margin-left:-0px;text-align:center;color:#000">0 %</div></div></div><div class="c" style="left:362px;width:86px;"><div class="a" style="left:3px;top:2px"><svg width="16" height="16" viewBox="0 0 16 16" style="display:block;"><defs><radialGradient id="g49" cx="0.5" cy="0.72" r="0.7"><stop offset="0" stop-color="#22f422"/><stop offset="0.55" stop-color="#10b414"/><stop offset="1" stop-color="#06640a"/></radialGradient><linearGradient id="g50" x1="0" y1="0" x2="0" y2="1"><stop offset="0" stop-color="#ffffff" stop-opacity="0.95"/><stop offset="1" stop-color="#ffffff" stop-opacity="0.1"/></linearGradient></defs><circle cx="8" cy="8" r="7.300" fill="url(#g49)" stroke="#075c0c" stroke-width="1.100"/><ellipse cx="8" cy="4.800" rx="4.600" ry="3" fill="url(#g50)"/></svg></div><span style="position:absolute;left:23px">Normal</span></div><div class="c" style="left:448px;width:82px;padding-left:2px;line-height:20px">Administrator</div><div class="c" style="left:530px;width:150px;padding-left:3px;line-height:19px">Administrator,John</div><div class="c" style="left:680px;width:101px;padding-left:3px;letter-spacing:0.200px">7/20/2010 1:51 PM</div><div class="c" style="left:781px;width:68px;text-align:right;padding-right:2px"></div><div class="c" style="left:849px;width:93px;padding-left:3px"></div><div class="c" style="left:942px;width:94px;padding-left:3px"></div></div><div class="row" style="top:242px;width:1036px"><div class="c" style="left:0px;width:41px;text-align:right;padding-right:3px">324</div><div class="c" style="left:41px;width:133px;padding-left:1px">1</div><div class="c" style="left:174px;width:119px;"><div class="a" style="left:2px;top:2px"><svg width="18" height="18" viewBox="0 0 18 18" style="display:block;"><defs><linearGradient id="g52" x1="0" y1="0" x2="1" y2="1"><stop offset="0" stop-color="#ffffff"/><stop offset="1" stop-color="#dcdcdc"/></linearGradient></defs><rect x="7.9" y="1.4" width="10" height="13" fill="#bdbdbd"/><rect x="7" y="0.5" width="10" height="13" fill="url(#g52)" stroke="#d0d0d0" stroke-width="0.6"/><defs><radialGradient id="g51"><stop offset="0" stop-color="#fff200"/><stop offset="0.55" stop-color="#ffc81e"/><stop offset="1" stop-color="#f7941d"/></radialGradient></defs><path d="M7.50 3.80L8.84 6.97L12.03 5.67L10.73 8.86L13.90 10.20L10.73 11.54L12.03 14.73L8.84 13.43L7.50 16.60L6.16 13.43L2.97 14.73L4.27 11.54L1.10 10.20L4.27 8.86L2.97 5.67L6.16 6.97z" fill="url(#g51)" stroke="#f58a1c" stroke-width="0.600" stroke-linejoin="round"/></svg></div><span style="position:absolute;left:23px">Created</span></div><div class="c" style="left:293px;width:69px;"><div class="a" style="left:2px;top:0;width:64px;height:21px;overflow:hidden"><div style="width:64px;margin-left:-0px;text-align:center;color:#000">0 %</div></div></div><div class="c" style="left:362px;width:86px;"><div class="a" style="left:3px;top:2px"><svg width="16" height="16" viewBox="0 0 16 16" style="display:block;"><defs><radialGradient id="g53" cx="0.5" cy="0.72" r="0.7"><stop offset="0" stop-color="#22f422"/><stop offset="0.55" stop-color="#10b414"/><stop offset="1" stop-color="#06640a"/></radialGradient><linearGradient id="g54" x1="0" y1="0" x2="0" y2="1"><stop offset="0" stop-color="#ffffff" stop-opacity="0.95"/><stop offset="1" stop-color="#ffffff" stop-opacity="0.1"/></linearGradient></defs><circle cx="8" cy="8" r="7.300" fill="url(#g53)" stroke="#075c0c" stroke-width="1.100"/><ellipse cx="8" cy="4.800" rx="4.600" ry="3" fill="url(#g54)"/></svg></div><span style="position:absolute;left:23px">Normal</span></div><div class="c" style="left:448px;width:82px;padding-left:2px;line-height:20px">Administrator</div><div class="c" style="left:530px;width:150px;padding-left:3px">John Smith</div><div class="c" style="left:680px;width:101px;padding-left:3px;letter-spacing:0.200px">7/20/2010 1:54 PM</div><div class="c" style="left:781px;width:68px;text-align:right;padding-right:2px"></div><div class="c" style="left:849px;width:93px;padding-left:3px"></div><div class="c" style="left:942px;width:94px;padding-left:3px">USA</div></div><div class="row" style="top:264px;width:1036px"><div class="c" style="left:0px;width:41px;text-align:right;padding-right:3px">325</div><div class="c" style="left:41px;width:133px;padding-left:1px">Canada</div><div class="c" style="left:174px;width:119px;"><div class="a" style="left:2px;top:2px"><svg width="18" height="18" viewBox="0 0 18 18" style="display:block;"><defs><linearGradient id="g55" x1="0" y1="0" x2="1" y2="1"><stop offset="0" stop-color="#ffffff"/><stop offset="1" stop-color="#dcdcdc"/></linearGradient></defs><rect x="7.9" y="1.4" width="10" height="13" fill="#bdbdbd"/><rect x="7" y="0.5" width="10" height="13" fill="url(#g55)" stroke="#d0d0d0" stroke-width="0.6"/><path d="M1.500 7.500l8.500 3.800-8.500 4.200 2-4z" fill="#5a88f0" stroke="#2456d4" stroke-width="0.900" stroke-linejoin="round"/></svg></div><span style="position:absolute;left:23px">In Progress</span></div><div class="c" style="left:293px;width:69px;"><div class="a" style="left:2px;top:0;width:64px;height:21px;overflow:hidden"><div style="width:64px;margin-left:-0px;text-align:center;color:#000">1 %</div></div></div><div class="c" style="left:362px;width:86px;"><div class="a" style="left:3px;top:2px"><svg width="16" height="16" viewBox="0 0 16 16" style="display:block;"><defs><radialGradient id="g56" cx="0.5" cy="0.72" r="0.7"><stop offset="0" stop-color="#22f422"/><stop offset="0.55" stop-color="#10b414"/><stop offset="1" stop-color="#06640a"/></radialGradient><linearGradient id="g57" x1="0" y1="0" x2="0" y2="1"><stop offset="0" stop-color="#ffffff" stop-opacity="0.95"/><stop offset="1" stop-color="#ffffff" stop-opacity="0.1"/></linearGradient></defs><circle cx="8" cy="8" r="7.300" fill="url(#g56)" stroke="#075c0c" stroke-width="1.100"/><ellipse cx="8" cy="4.800" rx="4.600" ry="3" fill="url(#g57)"/></svg></div><span style="position:absolute;left:23px">Normal</span></div><div class="c" style="left:448px;width:82px;padding-left:2px;line-height:20px">Administrator</div><div class="c" style="left:530px;width:150px;padding-left:3px;line-height:19px">Administrator,Jennifer</div><div class="c" style="left:680px;width:101px;padding-left:3px;letter-spacing:0.200px">7/20/2010 1:55 PM</div><div class="c" style="left:781px;width:68px;text-align:right;padding-right:2px"></div><div class="c" style="left:849px;width:93px;padding-left:3px"></div><div class="c" style="left:942px;width:94px;padding-left:3px">Canada</div></div><div class="row" style="top:286px;width:1036px"><div class="c" style="left:0px;width:41px;text-align:right;padding-right:3px">326</div><div class="c" style="left:41px;width:133px;padding-left:1px">Germany</div><div class="c" style="left:174px;width:119px;"><div class="a" style="left:2px;top:2px"><svg width="18" height="18" viewBox="0 0 18 18" style="display:block;"><defs><linearGradient id="g58" x1="0" y1="0" x2="1" y2="1"><stop offset="0" stop-color="#ffffff"/><stop offset="1" stop-color="#dcdcdc"/></linearGradient></defs><rect x="7.9" y="1.4" width="10" height="13" fill="#bdbdbd"/><rect x="7" y="0.5" width="10" height="13" fill="url(#g58)" stroke="#d0d0d0" stroke-width="0.6"/><path d="M1.500 7.500l8.500 3.800-8.500 4.200 2-4z" fill="#5a88f0" stroke="#2456d4" stroke-width="0.900" stroke-linejoin="round"/></svg></div><span style="position:absolute;left:23px">In Progress</span></div><div class="c" style="left:293px;width:69px;"><div class="a" style="left:2px;top:0;width:64px;height:21px;overflow:hidden"><div style="width:64px;margin-left:-0px;text-align:center;color:#000">1 %</div></div></div><div class="c" style="left:362px;width:86px;"><div class="a" style="left:3px;top:2px"><svg width="16" height="16" viewBox="0 0 16 16" style="display:block;"><defs><radialGradient id="g59" cx="0.5" cy="0.72" r="0.7"><stop offset="0" stop-color="#22f422"/><stop offset="0.55" stop-color="#10b414"/><stop offset="1" stop-color="#06640a"/></radialGradient><linearGradient id="g60" x1="0" y1="0" x2="0" y2="1"><stop offset="0" stop-color="#ffffff" stop-opacity="0.95"/><stop offset="1" stop-color="#ffffff" stop-opacity="0.1"/></linearGradient></defs><circle cx="8" cy="8" r="7.300" fill="url(#g59)" stroke="#075c0c" stroke-width="1.100"/><ellipse cx="8" cy="4.800" rx="4.600" ry="3" fill="url(#g60)"/></svg></div><span style="position:absolute;left:23px">Normal</span></div><div class="c" style="left:448px;width:82px;padding-left:2px;line-height:20px">Administrator</div><div class="c" style="left:530px;width:150px;padding-left:3px">Kate Stewart</div><div class="c" style="left:680px;width:101px;padding-left:3px;letter-spacing:0.200px">7/20/2010 1:55 PM</div><div class="c" style="left:781px;width:68px;text-align:right;padding-right:2px"></div><div class="c" style="left:849px;width:93px;padding-left:3px"></div><div class="c" style="left:942px;width:94px;padding-left:3px">Germany</div></div><div class="row" style="top:308px;width:1036px"><div class="c" style="left:0px;width:41px;text-align:right;padding-right:3px">327</div><div class="c" style="left:41px;width:133px;padding-left:1px">1</div><div class="c" style="left:174px;width:119px;"><div class="a" style="left:2px;top:2px"><svg width="18" height="18" viewBox="0 0 18 18" style="display:block;"><defs><linearGradient id="g61" x1="0" y1="0" x2="1" y2="1"><stop offset="0" stop-color="#ffffff"/><stop offset="1" stop-color="#dcdcdc"/></linearGradient></defs><rect x="7.9" y="1.4" width="10" height="13" fill="#bdbdbd"/><rect x="7" y="0.5" width="10" height="13" fill="url(#g61)" stroke="#d0d0d0" stroke-width="0.6"/><path d="M9.62 4.47L9.72 8.44L13.61 9.22L10.23 11.29L11.49 15.05L8.00 13.16L5.38 16.13L5.28 12.16L1.39 11.38L4.77 9.31L3.51 5.55L7.00 7.44z" fill="#3a2a9c" stroke="#3a2a9c" stroke-width="1.300" stroke-linejoin="round"/><path d="M5 6.500l1.500 2M11 6l-1.500 2" stroke="#9a8ee0" stroke-width="0.800"/></svg></div><span style="position:absolute;left:23px">Draft</span></div><div class="c" style="left:293px;width:69px;"><div class="a" style="left:2px;top:0;width:64px;height:21px;overflow:hidden"><div style="width:64px;margin-left:-0px;text-align:center;color:#000">0 %</div></div></div><div class="c" style="left:362px;width:86px;"><div class="a" style="left:3px;top:2px"><svg width="16" height="16" viewBox="0 0 16 16" style="display:block;"><defs><radialGradient id="g62" cx="0.5" cy="0.72" r="0.7"><stop offset="0" stop-color="#22f422"/><stop offset="0.55" stop-color="#10b414"/><stop offset="1" stop-color="#06640a"/></radialGradient><linearGradient id="g63" x1="0" y1="0" x2="0" y2="1"><stop offset="0" stop-color="#ffffff" stop-opacity="0.95"/><stop offset="1" stop-color="#ffffff" stop-opacity="0.1"/></linearGradient></defs><circle cx="8" cy="8" r="7.300" fill="url(#g62)" stroke="#075c0c" stroke-width="1.100"/><ellipse cx="8" cy="4.800" rx="4.600" ry="3" fill="url(#g63)"/></svg></div><span style="position:absolute;left:23px">Normal</span></div><div class="c" style="left:448px;width:82px;padding-left:2px;line-height:20px">Administrator</div><div class="c" style="left:530px;width:150px;padding-left:3px">Administrator,Peter Brown</div><div class="c" style="left:680px;width:101px;padding-left:3px;letter-spacing:0.200px">7/20/2010 1:55 PM</div><div class="c" style="left:781px;width:68px;text-align:right;padding-right:2px"></div><div class="c" style="left:849px;width:93px;padding-left:3px">Customer 1</div><div class="c" style="left:942px;width:94px;padding-left:3px"></div></div><div class="row" style="top:330px;width:1036px"><div class="c" style="left:0px;width:41px;text-align:right;padding-right:3px">330</div><div class="c" style="left:41px;width:133px;padding-left:1px">Email Message</div><div class="c" style="left:174px;width:119px;"><div class="a" style="left:2px;top:2px"><svg width="18" height="18" viewBox="0 0 18 18" style="display:block;"><defs><linearGradient id="g64" x1="0" y1="0" x2="1" y2="1"><stop offset="0" stop-color="#ffffff"/><stop offset="1" stop-color="#dcdcdc"/></linearGradient></defs><rect x="7.9" y="1.4" width="10" height="13" fill="#bdbdbd"/><rect x="7" y="0.5" width="10" height="13" fill="url(#g64)" stroke="#d0d0d0" stroke-width="0.6"/><path d="M1.500 7.500l8.500 3.800-8.500 4.200 2-4z" fill="#5a88f0" stroke="#2456d4" stroke-width="0.900" stroke-linejoin="round"/></svg></div><span style="position:absolute;left:23px">In Progress</span></div><div class="c" style="left:293px;width:69px;"><div class="bar" style="width:6px"></div><div class="a" style="left:8px;top:0;width:58px;height:21px;overflow:hidden"><div style="width:64px;margin-left:-6px;text-align:center;color:#000">10 %</div></div><div class="a" style="left:2px;top:0;width:6px;height:21px;overflow:hidden"><div style="width:64px;text-align:center;color:#DC3CD4;line-height:22px">10 %</div></div></div><div class="c" style="left:362px;width:86px;"><div class="a" style="left:3px;top:2px"><svg width="16" height="16" viewBox="0 0 16 16" style="display:block;"><defs><radialGradient id="g65" cx="0.5" cy="0.72" r="0.7"><stop offset="0" stop-color="#22f422"/><stop offset="0.55" stop-color="#10b414"/><stop offset="1" stop-color="#06640a"/></radialGradient><linearGradient id="g66" x1="0" y1="0" x2="0" y2="1"><stop offset="0" stop-color="#ffffff" stop-opacity="0.95"/><stop offset="1" stop-color="#ffffff" stop-opacity="0.1"/></linearGradient></defs><circle cx="8" cy="8" r="7.300" fill="url(#g65)" stroke="#075c0c" stroke-width="1.100"/><ellipse cx="8" cy="4.800" rx="4.600" ry="3" fill="url(#g66)"/></svg></div><span style="position:absolute;left:23px">Normal</span></div><div class="c" style="left:448px;width:82px;padding-left:2px;line-height:20px">Administrator</div><div class="c" style="left:530px;width:150px;padding-left:3px">John Smith</div><div class="c" style="left:680px;width:101px;padding-left:3px;letter-spacing:0.200px">7/20/2010 1:24 PM</div><div class="c" style="left:781px;width:68px;text-align:right;padding-right:2px"></div><div class="c" style="left:849px;width:93px;padding-left:3px">Customer 1</div><div class="c" style="left:942px;width:94px;padding-left:3px"></div></div><div class="row" style="top:352px;width:1036px"><div class="c" style="left:0px;width:41px;text-align:right;padding-right:3px">332</div><div class="c" style="left:41px;width:133px;padding-left:1px">Visit</div><div class="c" style="left:174px;width:119px;"><div class="a" style="left:2px;top:2px"><svg width="18" height="18" viewBox="0 0 18 18" style="display:block;"><defs><linearGradient id="g67" x1="0" y1="0" x2="1" y2="1"><stop offset="0" stop-color="#ffffff"/><stop offset="1" stop-color="#dcdcdc"/></linearGradient></defs><rect x="7.9" y="1.4" width="10" height="13" fill="#bdbdbd"/><rect x="7" y="0.5" width="10" height="13" fill="url(#g67)" stroke="#d0d0d0" stroke-width="0.6"/><path d="M9.62 4.47L9.72 8.44L13.61 9.22L10.23 11.29L11.49 15.05L8.00 13.16L5.38 16.13L5.28 12.16L1.39 11.38L4.77 9.31L3.51 5.55L7.00 7.44z" fill="#3a2a9c" stroke="#3a2a9c" stroke-width="1.300" stroke-linejoin="round"/><path d="M5 6.500l1.500 2M11 6l-1.500 2" stroke="#9a8ee0" stroke-width="0.800"/></svg></div><span style="position:absolute;left:23px">Draft</span></div><div class="c" style="left:293px;width:69px;"><div class="a" style="left:2px;top:0;width:64px;height:21px;overflow:hidden"><div style="width:64px;margin-left:-0px;text-align:center;color:#000">0 %</div></div></div><div class="c" style="left:362px;width:86px;"><div class="a" style="left:3px;top:2px"><svg width="16" height="16" viewBox="0 0 16 16" style="display:block;"><defs><radialGradient id="g68" cx="0.5" cy="0.72" r="0.7"><stop offset="0" stop-color="#22f422"/><stop offset="0.55" stop-color="#10b414"/><stop offset="1" stop-color="#06640a"/></radialGradient><linearGradient id="g69" x1="0" y1="0" x2="0" y2="1"><stop offset="0" stop-color="#ffffff" stop-opacity="0.95"/><stop offset="1" stop-color="#ffffff" stop-opacity="0.1"/></linearGradient></defs><circle cx="8" cy="8" r="7.300" fill="url(#g68)" stroke="#075c0c" stroke-width="1.100"/><ellipse cx="8" cy="4.800" rx="4.600" ry="3" fill="url(#g69)"/></svg></div><span style="position:absolute;left:23px">Normal</span></div><div class="c" style="left:448px;width:82px;padding-left:2px;line-height:20px">Administrator</div><div class="c" style="left:530px;width:150px;padding-left:3px">Administrator</div><div class="c" style="left:680px;width:101px;text-align:center;padding-right:5px;line-height:20px;letter-spacing:0.100px">10/8/2007 12:04</div><div class="c" style="left:781px;width:68px;text-align:right;padding-right:2px"></div><div class="c" style="left:849px;width:93px;padding-left:3px">Customer 2</div><div class="c" style="left:942px;width:94px;padding-left:3px"></div></div><div class="row" style="top:374px;width:1036px"><div class="c" style="left:0px;width:41px;text-align:right;padding-right:3px">333</div><div class="c" style="left:41px;width:133px;padding-left:1px">Call</div><div class="c" style="left:174px;width:119px;"><div class="a" style="left:2px;top:2px"><svg width="18" height="18" viewBox="0 0 18 18" style="display:block;"><defs><linearGradient id="g70" x1="0" y1="0" x2="1" y2="1"><stop offset="0" stop-color="#ffffff"/><stop offset="1" stop-color="#dcdcdc"/></linearGradient></defs><rect x="7.9" y="1.4" width="10" height="13" fill="#bdbdbd"/><rect x="7" y="0.5" width="10" height="13" fill="url(#g70)" stroke="#d0d0d0" stroke-width="0.6"/><path d="M9.62 4.47L9.72 8.44L13.61 9.22L10.23 11.29L11.49 15.05L8.00 13.16L5.38 16.13L5.28 12.16L1.39 11.38L4.77 9.31L3.51 5.55L7.00 7.44z" fill="#3a2a9c" stroke="#3a2a9c" stroke-width="1.300" stroke-linejoin="round"/><path d="M5 6.500l1.500 2M11 6l-1.500 2" stroke="#9a8ee0" stroke-width="0.800"/></svg></div><span style="position:absolute;left:23px">Draft</span></div><div class="c" style="left:293px;width:69px;"><div class="a" style="left:2px;top:0;width:64px;height:21px;overflow:hidden"><div style="width:64px;margin-left:-0px;text-align:center;color:#000">0 %</div></div></div><div class="c" style="left:362px;width:86px;"><div class="a" style="left:3px;top:2px"><svg width="16" height="16" viewBox="0 0 16 16" style="display:block;"><defs><radialGradient id="g71" cx="0.5" cy="0.72" r="0.7"><stop offset="0" stop-color="#22f422"/><stop offset="0.55" stop-color="#10b414"/><stop offset="1" stop-color="#06640a"/></radialGradient><linearGradient id="g72" x1="0" y1="0" x2="0" y2="1"><stop offset="0" stop-color="#ffffff" stop-opacity="0.95"/><stop offset="1" stop-color="#ffffff" stop-opacity="0.1"/></linearGradient></defs><circle cx="8" cy="8" r="7.300" fill="url(#g71)" stroke="#075c0c" stroke-width="1.100"/><ellipse cx="8" cy="4.800" rx="4.600" ry="3" fill="url(#g72)"/></svg></div><span style="position:absolute;left:23px">Normal</span></div><div class="c" style="left:448px;width:82px;padding-left:2px;line-height:20px">Administrator</div><div class="c" style="left:530px;width:150px;padding-left:3px">Administrator</div><div class="c" style="left:680px;width:101px;text-align:center;padding-right:5px;line-height:20px;letter-spacing:0.100px">10/8/2007 12:00</div><div class="c" style="left:781px;width:68px;text-align:right;padding-right:2px"></div><div class="c" style="left:849px;width:93px;padding-left:3px">Customer 3</div><div class="c" style="left:942px;width:94px;padding-left:3px"></div></div><div class="row" style="top:396px;width:1036px"><div class="c" style="left:0px;width:41px;text-align:right;padding-right:3px">347</div><div class="c" style="left:41px;width:133px;padding-left:1px">Pos 2</div><div class="c" style="left:174px;width:119px;"><div class="a" style="left:2px;top:2px"><svg width="18" height="18" viewBox="0 0 18 18" style="display:block;"><defs><linearGradient id="g73" x1="0" y1="0" x2="1" y2="1"><stop offset="0" stop-color="#ffffff"/><stop offset="1" stop-color="#dcdcdc"/></linearGradient></defs><rect x="7.9" y="1.4" width="10" height="13" fill="#bdbdbd"/><rect x="7" y="0.5" width="10" height="13" fill="url(#g73)" stroke="#d0d0d0" stroke-width="0.6"/><path d="M9.62 4.47L9.72 8.44L13.61 9.22L10.23 11.29L11.49 15.05L8.00 13.16L5.38 16.13L5.28 12.16L1.39 11.38L4.77 9.31L3.51 5.55L7.00 7.44z" fill="#3a2a9c" stroke="#3a2a9c" stroke-width="1.300" stroke-linejoin="round"/><path d="M5 6.500l1.500 2M11 6l-1.500 2" stroke="#9a8ee0" stroke-width="0.800"/></svg></div><span style="position:absolute;left:23px">Draft</span></div><div class="c" style="left:293px;width:69px;"><div class="a" style="left:2px;top:0;width:64px;height:21px;overflow:hidden"><div style="width:64px;margin-left:-0px;text-align:center;color:#000">0 %</div></div></div><div class="c" style="left:362px;width:86px;"><div class="a" style="left:3px;top:2px"><svg width="16" height="16" viewBox="0 0 16 16" style="display:block;"><defs><radialGradient id="g74" cx="0.5" cy="0.72" r="0.7"><stop offset="0" stop-color="#22f422"/><stop offset="0.55" stop-color="#10b414"/><stop offset="1" stop-color="#06640a"/></radialGradient><linearGradient id="g75" x1="0" y1="0" x2="0" y2="1"><stop offset="0" stop-color="#ffffff" stop-opacity="0.95"/><stop offset="1" stop-color="#ffffff" stop-opacity="0.1"/></linearGradient></defs><circle cx="8" cy="8" r="7.300" fill="url(#g74)" stroke="#075c0c" stroke-width="1.100"/><ellipse cx="8" cy="4.800" rx="4.600" ry="3" fill="url(#g75)"/></svg></div><span style="position:absolute;left:23px">Normal</span></div><div class="c" style="left:448px;width:82px;padding-left:2px;line-height:20px">Administrator</div><div class="c" style="left:530px;width:150px;padding-left:3px">Administrator</div><div class="c" style="left:680px;width:101px;text-align:center;padding-right:5px;line-height:20px;letter-spacing:0.100px">10/8/2007 12:15</div><div class="c" style="left:781px;width:68px;text-align:right;padding-right:2px">2.15</div><div class="c" style="left:849px;width:93px;padding-left:3px">Customer 1</div><div class="c" style="left:942px;width:94px;padding-left:3px"></div></div><div class="row" style="top:418px;width:1036px"><div class="c" style="left:0px;width:41px;text-align:right;padding-right:3px">350</div><div class="c" style="left:41px;width:133px;padding-left:1px">Pos 3</div><div class="c" style="left:174px;width:119px;"><div class="a" style="left:2px;top:2px"><svg width="18" height="18" viewBox="0 0 18 18" style="display:block;"><defs><linearGradient id="g76" x1="0" y1="0" x2="1" y2="1"><stop offset="0" stop-color="#ffffff"/><stop offset="1" stop-color="#dcdcdc"/></linearGradient></defs><rect x="7.9" y="1.4" width="10" height="13" fill="#bdbdbd"/><rect x="7" y="0.5" width="10" height="13" fill="url(#g76)" stroke="#d0d0d0" stroke-width="0.6"/><path d="M9.62 4.47L9.72 8.44L13.61 9.22L10.23 11.29L11.49 15.05L8.00 13.16L5.38 16.13L5.28 12.16L1.39 11.38L4.77 9.31L3.51 5.55L7.00 7.44z" fill="#3a2a9c" stroke="#3a2a9c" stroke-width="1.300" stroke-linejoin="round"/><path d="M5 6.500l1.500 2M11 6l-1.500 2" stroke="#9a8ee0" stroke-width="0.800"/></svg></div><span style="position:absolute;left:23px">Draft</span></div><div class="c" style="left:293px;width:69px;"><div class="a" style="left:2px;top:0;width:64px;height:21px;overflow:hidden"><div style="width:64px;margin-left:-0px;text-align:center;color:#000">0 %</div></div></div><div class="c" style="left:362px;width:86px;"><div class="a" style="left:3px;top:2px"><svg width="16" height="16" viewBox="0 0 16 16" style="display:block;"><defs><radialGradient id="g77" cx="0.5" cy="0.72" r="0.7"><stop offset="0" stop-color="#22f422"/><stop offset="0.55" stop-color="#10b414"/><stop offset="1" stop-color="#06640a"/></radialGradient><linearGradient id="g78" x1="0" y1="0" x2="0" y2="1"><stop offset="0" stop-color="#ffffff" stop-opacity="0.95"/><stop offset="1" stop-color="#ffffff" stop-opacity="0.1"/></linearGradient></defs><circle cx="8" cy="8" r="7.300" fill="url(#g77)" stroke="#075c0c" stroke-width="1.100"/><ellipse cx="8" cy="4.800" rx="4.600" ry="3" fill="url(#g78)"/></svg></div><span style="position:absolute;left:23px">Normal</span></div><div class="c" style="left:448px;width:82px;padding-left:2px;line-height:20px">Administrator</div><div class="c" style="left:530px;width:150px;padding-left:3px">Administrator</div><div class="c" style="left:680px;width:101px;text-align:center;padding-right:5px;line-height:20px;letter-spacing:0.100px">10/8/2007 12:15</div><div class="c" style="left:781px;width:68px;text-align:right;padding-right:2px">1200.00</div><div class="c" style="left:849px;width:93px;padding-left:3px">Customer 1</div><div class="c" style="left:942px;width:94px;padding-left:3px"></div></div><div class="row" style="top:440px;width:1036px"><div class="c" style="left:0px;width:41px;text-align:right;padding-right:3px">354</div><div class="c" style="left:41px;width:133px;padding-left:1px">2</div><div class="c" style="left:174px;width:119px;"><div class="a" style="left:2px;top:2px"><svg width="18" height="18" viewBox="0 0 18 18" style="display:block;"><defs><linearGradient id="g79" x1="0" y1="0" x2="1" y2="1"><stop offset="0" stop-color="#ffffff"/><stop offset="1" stop-color="#dcdcdc"/></linearGradient></defs><rect x="7.9" y="1.4" width="10" height="13" fill="#bdbdbd"/><rect x="7" y="0.5" width="10" height="13" fill="url(#g79)" stroke="#d0d0d0" stroke-width="0.6"/><path d="M9.62 4.47L9.72 8.44L13.61 9.22L10.23 11.29L11.49 15.05L8.00 13.16L5.38 16.13L5.28 12.16L1.39 11.38L4.77 9.31L3.51 5.55L7.00 7.44z" fill="#3a2a9c" stroke="#3a2a9c" stroke-width="1.300" stroke-linejoin="round"/><path d="M5 6.500l1.500 2M11 6l-1.500 2" stroke="#9a8ee0" stroke-width="0.800"/></svg></div><span style="position:absolute;left:23px">Draft</span></div><div class="c" style="left:293px;width:69px;"><div class="a" style="left:2px;top:0;width:64px;height:21px;overflow:hidden"><div style="width:64px;margin-left:-0px;text-align:center;color:#000">0 %</div></div></div><div class="c" style="left:362px;width:86px;"><div class="a" style="left:3px;top:2px"><svg width="16" height="16" viewBox="0 0 16 16" style="display:block;"><defs><radialGradient id="g80" cx="0.5" cy="0.72" r="0.7"><stop offset="0" stop-color="#22f422"/><stop offset="0.55" stop-color="#10b414"/><stop offset="1" stop-color="#06640a"/></radialGradient><linearGradient id="g81" x1="0" y1="0" x2="0" y2="1"><stop offset="0" stop-color="#ffffff" stop-opacity="0.95"/><stop offset="1" stop-color="#ffffff" stop-opacity="0.1"/></linearGradient></defs><circle cx="8" cy="8" r="7.300" fill="url(#g80)" stroke="#075c0c" stroke-width="1.100"/><ellipse cx="8" cy="4.800" rx="4.600" ry="3" fill="url(#g81)"/></svg></div><span style="position:absolute;left:23px">Normal</span></div><div class="c" style="left:448px;width:82px;padding-left:2px;line-height:20px">Administrator</div><div class="c" style="left:530px;width:150px;padding-left:3px">Administrator</div><div class="c" style="left:680px;width:101px;padding-left:3px;letter-spacing:0.200px">7/20/2010 1:56 PM</div><div class="c" style="left:781px;width:68px;text-align:right;padding-right:2px"></div><div class="c" style="left:849px;width:93px;padding-left:3px">Customer 2</div><div class="c" style="left:942px;width:94px;padding-left:3px"></div></div><div class="row" style="top:462px;width:1036px"><div class="c" style="left:0px;width:41px;text-align:right;padding-right:3px">355</div><div class="c" style="left:41px;width:133px;padding-left:1px">3</div><div class="c" style="left:174px;width:119px;"><div class="a" style="left:2px;top:2px"><svg width="18" height="18" viewBox="0 0 18 18" style="display:block;"><defs><linearGradient id="g82" x1="0" y1="0" x2="1" y2="1"><stop offset="0" stop-color="#ffffff"/><stop offset="1" stop-color="#dcdcdc"/></linearGradient></defs><rect x="7.9" y="1.4" width="10" height="13" fill="#bdbdbd"/><rect x="7" y="0.5" width="10" height="13" fill="url(#g82)" stroke="#d0d0d0" stroke-width="0.6"/><path d="M9.62 4.47L9.72 8.44L13.61 9.22L10.23 11.29L11.49 15.05L8.00 13.16L5.38 16.13L5.28 12.16L1.39 11.38L4.77 9.31L3.51 5.55L7.00 7.44z" fill="#3a2a9c" stroke="#3a2a9c" stroke-width="1.300" stroke-linejoin="round"/><path d="M5 6.500l1.500 2M11 6l-1.500 2" stroke="#9a8ee0" stroke-width="0.800"/></svg></div><span style="position:absolute;left:23px">Draft</span></div><div class="c" style="left:293px;width:69px;"><div class="a" style="left:2px;top:0;width:64px;height:21px;overflow:hidden"><div style="width:64px;margin-left:-0px;text-align:center;color:#000">0 %</div></div></div><div class="c" style="left:362px;width:86px;"><div class="a" style="left:3px;top:2px"><svg width="16" height="16" viewBox="0 0 16 16" style="display:block;"><defs><radialGradient id="g83" cx="0.5" cy="0.72" r="0.7"><stop offset="0" stop-color="#22f422"/><stop offset="0.55" stop-color="#10b414"/><stop offset="1" stop-color="#06640a"/></radialGradient><linearGradient id="g84" x1="0" y1="0" x2="0" y2="1"><stop offset="0" stop-color="#ffffff" stop-opacity="0.95"/><stop offset="1" stop-color="#ffffff" stop-opacity="0.1"/></linearGradient></defs><circle cx="8" cy="8" r="7.300" fill="url(#g83)" stroke="#075c0c" stroke-width="1.100"/><ellipse cx="8" cy="4.800" rx="4.600" ry="3" fill="url(#g84)"/></svg></div><span style="position:absolute;left:23px">Normal</span></div><div class="c" style="left:448px;width:82px;padding-left:2px;line-height:20px">Administrator</div><div class="c" style="left:530px;width:150px;padding-left:3px">Administrator</div><div class="c" style="left:680px;width:101px;padding-left:3px;letter-spacing:0.200px">7/20/2010 1:56 PM</div><div class="c" style="left:781px;width:68px;text-align:right;padding-right:2px"></div><div class="c" style="left:849px;width:93px;padding-left:3px">Customer 3</div><div class="c" style="left:942px;width:94px;padding-left:3px"></div></div><div class="row" style="top:484px;width:1036px"><div class="c" style="left:0px;width:41px;text-align:right;padding-right:3px">357</div><div class="c" style="left:41px;width:133px;padding-left:1px">Email Message</div><div class="c" style="left:174px;width:119px;"><div class="a" style="left:2px;top:2px"><svg width="18" height="18" viewBox="0 0 18 18" style="display:block;"><defs><linearGradient id="g85" x1="0" y1="0" x2="1" y2="1"><stop offset="0" stop-color="#ffffff"/><stop offset="1" stop-color="#dcdcdc"/></linearGradient></defs><rect x="7.9" y="1.4" width="10" height="13" fill="#bdbdbd"/><rect x="7" y="0.5" width="10" height="13" fill="url(#g85)" stroke="#d0d0d0" stroke-width="0.6"/><path d="M9.62 4.47L9.72 8.44L13.61 9.22L10.23 11.29L11.49 15.05L8.00 13.16L5.38 16.13L5.28 12.16L1.39 11.38L4.77 9.31L3.51 5.55L7.00 7.44z" fill="#3a2a9c" stroke="#3a2a9c" stroke-width="1.300" stroke-linejoin="round"/><path d="M5 6.500l1.500 2M11 6l-1.500 2" stroke="#9a8ee0" stroke-width="0.800"/></svg></div><span style="position:absolute;left:23px">Draft</span></div><div class="c" style="left:293px;width:69px;"><div class="a" style="left:2px;top:0;width:64px;height:21px;overflow:hidden"><div style="width:64px;margin-left:-0px;text-align:center;color:#000">0 %</div></div></div><div class="c" style="left:362px;width:86px;"><div class="a" style="left:3px;top:2px"><svg width="16" height="16" viewBox="0 0 16 16" style="display:block;"><defs><radialGradient id="g86" cx="0.5" cy="0.72" r="0.7"><stop offset="0" stop-color="#22f422"/><stop offset="0.55" stop-color="#10b414"/><stop offset="1" stop-color="#06640a"/></radialGradient><linearGradient id="g87" x1="0" y1="0" x2="0" y2="1"><stop offset="0" stop-color="#ffffff" stop-opacity="0.95"/><stop offset="1" stop-color="#ffffff" stop-opacity="0.1"/></linearGradient></defs><circle cx="8" cy="8" r="7.300" fill="url(#g86)" stroke="#075c0c" stroke-width="1.100"/><ellipse cx="8" cy="4.800" rx="4.600" ry="3" fill="url(#g87)"/></svg></div><span style="position:absolute;left:23px">Normal</span></div><div class="c" style="left:448px;width:82px;padding-left:2px;line-height:20px">Administrator</div><div class="c" style="left:530px;width:150px;padding-left:3px">Administrator</div><div class="c" style="left:680px;width:101px;text-align:center;padding-right:5px;line-height:20px;letter-spacing:0.100px">10/8/2007 12:04</div><div class="c" style="left:781px;width:68px;text-align:right;padding-right:2px"></div><div class="c" style="left:849px;width:93px;padding-left:3px">Customer 1</div><div class="c" style="left:942px;width:94px;padding-left:3px"></div></div><div class="row" style="top:506px;width:1036px"><div class="c" style="left:0px;width:41px;text-align:right;padding-right:3px"></div><div class="c" style="left:41px;width:133px;padding-left:1px"></div><div class="c" style="left:174px;width:119px;"><div class="a" style="left:2px;top:2px"><svg width="18" height="18" viewBox="0 0 18 18" style="display:block;"><defs><linearGradient id="g88" x1="0" y1="0" x2="1" y2="1"><stop offset="0" stop-color="#ffffff"/><stop offset="1" stop-color="#dcdcdc"/></linearGradient></defs><rect x="7.9" y="1.4" width="10" height="13" fill="#bdbdbd"/><rect x="7" y="0.5" width="10" height="13" fill="url(#g88)" stroke="#d0d0d0" stroke-width="0.6"/><path d="M9.62 4.47L9.72 8.44L13.61 9.22L10.23 11.29L11.49 15.05L8.00 13.16L5.38 16.13L5.28 12.16L1.39 11.38L4.77 9.31L3.51 5.55L7.00 7.44z" fill="#3a2a9c" stroke="#3a2a9c" stroke-width="1.300" stroke-linejoin="round"/><path d="M5 6.500l1.500 2M11 6l-1.500 2" stroke="#9a8ee0" stroke-width="0.800"/></svg></div><span style="position:absolute;left:23px">Draft</span></div><div class="c" style="left:293px;width:69px;"><div class="a" style="left:2px;top:0;width:64px;height:21px;overflow:hidden"><div style="width:64px;margin-left:-0px;text-align:center;color:#000">0 %</div></div></div><div class="c" style="left:362px;width:86px;"><div class="a" style="left:3px;top:2px"><svg width="16" height="16" viewBox="0 0 16 16" style="display:block;"><defs><radialGradient id="g89" cx="0.5" cy="0.72" r="0.7"><stop offset="0" stop-color="#22f422"/><stop offset="0.55" stop-color="#10b414"/><stop offset="1" stop-color="#06640a"/></radialGradient><linearGradient id="g90" x1="0" y1="0" x2="0" y2="1"><stop offset="0" stop-color="#ffffff" stop-opacity="0.95"/><stop offset="1" stop-color="#ffffff" stop-opacity="0.1"/></linearGradient></defs><circle cx="8" cy="8" r="7.300" fill="url(#g89)" stroke="#075c0c" stroke-width="1.100"/><ellipse cx="8" cy="4.800" rx="4.600" ry="3" fill="url(#g90)"/></svg></div><span style="position:absolute;left:23px">Normal</span></div><div class="c" style="left:448px;width:82px;padding-left:2px;line-height:20px">Administrator</div><div class="c" style="left:530px;width:150px;padding-left:3px">Administrator</div><div class="c" style="left:680px;width:101px;text-align:center;padding-right:5px;line-height:20px;letter-spacing:0.100px">10/8/2007 12:04</div><div class="c" style="left:781px;width:68px;text-align:right;padding-right:2px"></div><div class="c" style="left:849px;width:93px;padding-left:3px"></div><div class="c" style="left:942px;width:94px;padding-left:3px"></div></div></div><div class="a" style="left:0;top:76px;width:1036px;height:21px;border:1px dotted #D8A040;border-left:none;border-right:none;pointer-events:none"></div><div class="a" style="left:0;top:567px;width:1036px;height:25px;background:#ECE9D8;border-top:1px solid #ACA899"><div class="a" style="left:2px;top:2px;width:37px;height:21px;border:1px solid #C5C2B2;border-radius:2px;background:#F1EFE6;text-align:right;padding-right:4px;line-height:18px">36</div></div><div class="a sb" style="left:1036px;top:0px;width:17px;height:593px"><div class="a sbtn" style="left:1px;top:0;width:15px;height:16px"></div><svg class="a" style="left:4px;top:4px" width="9" height="9" viewBox="0 0 9 9"><path d="M0.800 5.800l3.700-3.600 3.700 3.600" stroke="#4D6185" stroke-width="2" fill="none"/></svg><div class="a sbtn" style="left:1px;top:577px;width:15px;height:16px"></div><svg class="a" style="left:4px;top:581px" width="9" height="9" viewBox="0 0 9 9"><path d="M0.800 1.200l3.700 3.600 3.700-3.600" stroke="#4D6185" stroke-width="2" fill="none"/></svg><div class="a sthumb" style="left:1px;top:18px;width:15px;height:355px"></div><div class="a" style="left:5px;top:191px;width:6px;height:8px;background:repeating-linear-gradient(to bottom,#EEF4FE 0,#EEF4FE 1px,#8CB0F8 1px,#8CB0F8 2px)"></div></div></div><div class="a" style="left:217px;top:739px;width:1057px;height:1px;background:#fff"></div><div class="a" style="left:1273px;top:99px;width:1px;height:641px;background:#fff"></div><div class="a" style="left:0;top:740px;width:1275px;height:1px;background:#8E9DB0"></div><div class="a" style="left:1274px;top:99px;width:1px;height:642px;background:#8E9DB0"></div><div class="a" style="left:216px;top:99px;width:2px;height:641px;background:#F6F5EF"></div><div class="a phead" style="left:0px;top:745px;width:597px;height:22px"><div class="a" style="left:6px;top:1px;"><svg width="18" height="18" viewBox="0 0 18 18" style="display:block;"><path d="M1.500 8.500l7.500-7 7.500 7z" fill="#8E9CE4" stroke="#7A88D0" stroke-width="0.600"/><path d="M5 9l3-4.500 5 1.500 1 4z" fill="#F6F2B0" stroke="#D8D48A" stroke-width="0.500"/><path d="M1.500 8.500v8h15v-8l-7.500 4.500z" fill="#F4F6FC" stroke="#A8B4DC" stroke-width="0.800"/><path d="M1.500 16.500l6-4.500M16.500 16.500l-6-4.500" stroke="#C0C8E4" stroke-width="0.700"/></svg></div><div class="t ms" style="left:26px;top:4px">Notifications</div><div class="a" style="left:547px;top:4px;"><svg width="12" height="12" viewBox="0 0 12 12" style="display:block;"><rect x="0.500" y="0.500" width="11" height="11" rx="1.500" fill="#2A64DC" stroke="#1A48B4"/><rect x="2.800" y="3.300" width="6.400" height="5.600" fill="#5C8CF0" stroke="#fff" stroke-width="1.300"/><path d="M2.200 3h7.600" stroke="#fff" stroke-width="1.200"/></svg></div><div class="a" style="left:563px;top:4px;"><svg width="12" height="13" viewBox="0 0 12 13" style="display:block;"><rect x="4.300" y="2" width="3.400" height="4.500" fill="#8CB8F4"/><path d="M2.500 1.600h7M3.800 2v4.800M8.200 2v4.800M1.200 7.300h9.600M6 8v5" stroke="#1E40B0" stroke-width="1.500" fill="none"/></svg></div><div class="a pb cl" style="left:579px;top:4px"><svg width="10" height="10" viewBox="0 0 10 10" style="display:block;"><path d="M2 2l6 6M8 2l-6 6" stroke="#fff" stroke-width="1.800"/></svg></div></div><div class="a tbar" style="left:0px;top:769px;width:597px;height:28px"><div class="a grip" style="left:3px;top:6px;height:18px"></div><div class="a" style="left:13px;top:6px;"><svg width="18" height="17" viewBox="0 0 18 17" style="display:block;"><defs><linearGradient id="g91" gradientUnits="userSpaceOnUse" x1="0" y1="0" x2="0" y2="17"><stop offset="0" stop-color="#b4f0ac"/><stop offset="0.5" stop-color="#5ccc5c"/><stop offset="1" stop-color="#2ea836"/></linearGradient></defs><path d="M15.600 7.800A6.400 5.400 0 0 0 4.600 4.400" fill="none" stroke="#3aa840" stroke-width="3.400"/><path d="M15.600 7.800A6.400 5.400 0 0 0 4.600 4.400" fill="none" stroke="url(#g91)" stroke-width="2.400"/><path d="M0.800 2l0.600 6.600 6.400-1.800z" fill="#6cd468" stroke="#3aa840" stroke-width="0.600" stroke-linejoin="round"/><path d="M2.400 9.200A6.400 5.400 0 0 0 13.400 12.600" fill="none" stroke="#3aa840" stroke-width="3.400"/><path d="M2.400 9.200A6.400 5.400 0 0 0 13.400 12.600" fill="none" stroke="url(#g91)" stroke-width="2.400"/><path d="M17.200 15l-0.600-6.600-6.400 1.800z" fill="#4cc04c" stroke="#3aa840" stroke-width="0.600" stroke-linejoin="round"/></svg></div><div class="a sep" style="left:36px;top:5px;height:19px"></div><div class="a" style="left:43px;top:5px;"><svg width="18" height="18" viewBox="0 0 18 18" style="display:block;"><path d="M2 8l7-5 7 5v8h-14z" fill="#e4e4e4" stroke="#8a8a8a"/><path d="M2 8l7 4.500 7-4.500" fill="none" stroke="#8a8a8a"/><ellipse cx="9" cy="11" rx="4" ry="2.300" fill="#fff" stroke="#555" stroke-width="0.800"/><circle cx="9" cy="11" r="1.300" fill="#333"/></svg></div><div class="a" style="left:67px;top:5px;"><svg width="18" height="18" viewBox="0 0 18 18" style="display:block;"><path d="M2 8l7-5 7 5v8h-14z" fill="#e4e4e4" stroke="#8a8a8a"/><path d="M2 8l7 4.500 7-4.500" fill="none" stroke="#8a8a8a"/><ellipse cx="9" cy="11" rx="4" ry="2.300" fill="#fff" stroke="#555" stroke-width="0.800"/><circle cx="9" cy="11" r="1.300" fill="#333"/></svg></div><div class="a sep" style="left:91px;top:5px;height:19px"></div><div class="a pressed" style="left:95px;top:2px;width:24px;height:24px"></div><div class="a" style="left:98px;top:5px;"><svg width="18" height="18" viewBox="0 0 18 18" style="display:block;"><path d="M2 8l7-5 7 5v8h-14z" fill="#dfe8f8" stroke="#5577b8"/><path d="M2 8l7 4.500 7-4.500" fill="none" stroke="#5577b8"/><rect x="4" y="11" width="10" height="3" fill="#f08030"/><ellipse cx="9" cy="11" rx="4" ry="2.300" fill="#fff" stroke="#555" stroke-width="0.800"/><circle cx="9" cy="11" r="1.300" fill="#333"/></svg></div><div class="a" style="left:122px;top:5px;"><svg width="18" height="18" viewBox="0 0 18 18" style="display:block;"><path d="M2 8l7-5 7 5v8h-14z" fill="#e8ecf4" stroke="#7a8aa8"/><path d="M2 8l7 4.500 7-4.500" fill="none" stroke="#7a8aa8"/><circle cx="6" cy="12" r="3.5" fill="#d4d4e2" stroke="#6a6a78" stroke-width="0.7"/><circle cx="6" cy="12" r="2.1" fill="#141414"/><path d="M6 9.6V12.1H8.3" stroke="#fff" stroke-width="1.1" fill="none"/></svg></div><div class="a pressed" style="left:143px;top:2px;width:24px;height:24px"></div><div class="a" style="left:146px;top:5px;"><svg width="18" height="18" viewBox="0 0 18 18" style="display:block;"><rect x="3" y="2" width="12" height="14" fill="#fff" stroke="#7a8aa8"/><path d="M5 6h5M5 9h5M5 12h5" stroke="#555" stroke-width="1.200"/><path d="M12 5l3 3-3 3z" fill="#5b7fe0"/></svg></div><div class="a sep" style="left:170px;top:5px;height:19px"></div><div class="a" style="left:176px;top:4px;"><svg width="22" height="19" viewBox="0 0 22 19" style="display:block;"><defs><linearGradient id="g92" x1="0" y1="0" x2="1" y2="1"><stop offset="0" stop-color="#ffffff"/><stop offset="1" stop-color="#dcdcdc"/></linearGradient></defs><rect x="9.4" y="2.4" width="9" height="13" fill="#bdbdbd"/><rect x="8.5" y="1.5" width="9" height="13" fill="url(#g92)" stroke="#d0d0d0" stroke-width="0.6"/><circle cx="6.5" cy="12" r="5.5" fill="#d4d4e2" stroke="#6a6a78" stroke-width="0.7"/><circle cx="6.5" cy="12" r="4.1" fill="#4a4a4a"/><path d="M6.5 9.6V12.1H8.8" stroke="#fff" stroke-width="1.1" fill="none"/><path d="M10 16l0.800-3.200 5.700-5.800 2.400 2.400-5.700 5.800z" fill="#c8c8c8" stroke="#8a8a8a" stroke-width="0.600"/><path d="M10 16l0.700-2.600 1.900 1.900z" fill="#444"/></svg></div><div class="a" style="left:201px;top:4px;"><svg width="18" height="19" viewBox="0 0 18 19" style="display:block;"><path d="M8 17.500c-2.500-1.500-3.500-4-2.500-6l1.500 0.800v-8.800c0-1.600 2.200-1.600 2.200 0v4.200l4.600 0.800c1.500 0.400 1.700 1.800 1.300 3.800l-0.900 5.200z" fill="#e4e4e4" stroke="#8a8a8a" stroke-width="0.900" stroke-linejoin="round"/><circle cx="4.800" cy="13" r="3.400" fill="#5a5a5a" stroke="#b8b8c4" stroke-width="1"/><path d="M4.800 11v2h1.800" stroke="#fff" stroke-width="0.900" fill="none"/></svg></div><div class="a sep" style="left:225px;top:5px;height:19px"></div><div class="a" style="left:233px;top:5px;"><svg width="18" height="18" viewBox="0 0 18 18" style="display:block;"><rect x="1" y="2" width="9" height="14" fill="#f8f8f8" stroke="#cfcfcf" stroke-width="0.800"/><rect x="11" y="2" width="3" height="14" fill="#dcdcdc"/><rect x="15" y="2" width="2" height="14" fill="#e8e8e8"/><path d="M3 5.500h1M3 8.500h1M3 11.500h1M5.500 5.500h3.500M5.500 8.500h3.500M5.500 11.500h3.500" stroke="#555" stroke-width="1.200"/></svg></div><div class="a arr" style="left:252px;top:12px;border-top-color:#000"></div><div class="a sep" style="left:264px;top:5px;height:19px"></div><div class="a" style="left:272px;top:5px;"><svg width="18" height="18" viewBox="0 0 18 18" style="display:block;"><defs><linearGradient id="g93" x1="0" y1="0" x2="1" y2="0"><stop offset="0" stop-color="#aab2c0"/><stop offset="0.45" stop-color="#f0f0f0"/><stop offset="1" stop-color="#a8a8a8"/></linearGradient></defs><g transform="translate(1 1) scale(1.0)"><path d="M0.500 1.200l6 6.800v5.500l2.800 1.500v-7l6.200-6.800z" fill="url(#g93)" stroke="#a8a8a8" stroke-width="0.700" stroke-linejoin="round"/><ellipse cx="8" cy="1.300" rx="7.600" ry="1.300" fill="#aab2c0" stroke="#a8a8a8" stroke-width="0.700"/><ellipse cx="8" cy="1.300" rx="5.500" ry="0.600" fill="#f0f0f0"/></g><rect x="8" y="9" width="6" height="7" rx="2" fill="#E4E4E4" stroke="#b8b8b8" transform="rotate(30 11 12)"/></svg></div><div class="a pressed" style="left:293px;top:2px;width:24px;height:24px"></div><div class="a" style="left:297px;top:6px;"><svg width="17" height="17" viewBox="0 0 17 17" style="display:block;"><defs><linearGradient id="g94" x1="0" y1="0" x2="1" y2="0"><stop offset="0" stop-color="#aab2c0"/><stop offset="0.45" stop-color="#f4f6fa"/><stop offset="1" stop-color="#6c7686"/></linearGradient></defs><g transform="translate(0.5 1) scale(1.0)"><path d="M0.500 1.200l6 6.800v5.500l2.800 1.500v-7l6.200-6.800z" fill="url(#g94)" stroke="#6c7686" stroke-width="0.700" stroke-linejoin="round"/><ellipse cx="8" cy="1.300" rx="7.600" ry="1.300" fill="#aab2c0" stroke="#6c7686" stroke-width="0.700"/><ellipse cx="8" cy="1.300" rx="5.500" ry="0.600" fill="#f4f6fa"/></g></svg></div><div class="a arr" style="left:320px;top:19px;border-top-color:#000"></div></div><div class="a" style="left:1px;top:799px;width:596px;height:15px;background:#ACA899"></div><div class="t ms" style="left:9px;top:830px">Date created:</div><div class="a" style="left:79px;top:826px;width:121px;height:21px;border:1px solid #7F9DB9;background:#fff"><div class="t ms" style="left:3px;top:3px">This Week</div><div class="a cb" style="right:1px;top:1px;height:17px"></div><svg class="a" style="left:107px;top:6px" width="9" height="9" viewBox="0 0 9 9"><path d="M0.800 1.200l3.700 3.600 3.700-3.600" stroke="#4D6185" stroke-width="2" fill="none"/></svg></div><div class="t ms" style="left:206px;top:830px">Creator:</div><div class="a" style="left:248px;top:826px;width:121px;height:21px;border:1px solid #7F9DB9;background:#fff"><div class="t ms" style="left:3px;top:3px"></div><div class="a cb" style="right:1px;top:1px;height:17px"></div><svg class="a" style="left:107px;top:6px" width="9" height="9" viewBox="0 0 9 9"><path d="M0.800 1.200l3.700 3.600 3.700-3.600" stroke="#4D6185" stroke-width="2" fill="none"/></svg></div><div class="a" style="left:0;top:857px;width:598px;height:87px;border:1px solid #7F9DB9;border-left:none;border-bottom:none;background:#fff"><div class="a hdr ms" style="left:0;top:0;width:597px;height:19px"><div class="hc" style="left:0;width:320px">Title</div><div class="hc" style="left:320px;width:38px"></div><svg width="8" height="8" viewBox="0 0 8 8" style="display:block;position:absolute;left:329px;top:5px"><path d="M1 1.500h6l-3 5.500z" fill="none" stroke="#ACA899"/></svg><div class="fb" style="left:340px;top:3px"></div><svg class="a" style="left:343px;top:6px" width="9" height="9" viewBox="0 0 9 9"><path d="M0.800 1.200l3.700 3.600 3.700-3.600" stroke="#4D6185" stroke-width="2" fill="none"/></svg><div class="hc" style="left:358px;width:64px;padding-right:16px">Creator</div><div class="fb" style="left:404px;top:3px"></div><svg class="a" style="left:407px;top:6px" width="9" height="9" viewBox="0 0 9 9"><path d="M0.800 1.200l3.700 3.600 3.700-3.600" stroke="#4D6185" stroke-width="2" fill="none"/></svg><div class="hc" style="left:422px;width:175px">Task group</div></div><div class="t ms" style="left:0;width:597px;text-align:center;top:46px;color:#ACA899;text-shadow:none">&lt;No data to display&gt;</div></div><div class="a phead" style="left:602px;top:745px;width:673px;height:22px"><div class="t ms" style="left:4px;top:4px">Permissions</div><div class="a" style="left:623px;top:4px;"><svg width="12" height="12" viewBox="0 0 12 12" style="display:block;"><rect x="0.500" y="0.500" width="11" height="11" rx="1.500" fill="#2A64DC" stroke="#1A48B4"/><rect x="2.800" y="3.300" width="6.400" height="5.600" fill="#5C8CF0" stroke="#fff" stroke-width="1.300"/><path d="M2.200 3h7.600" stroke="#fff" stroke-width="1.200"/></svg></div><div class="a" style="left:639px;top:4px;"><svg width="12" height="13" viewBox="0 0 12 13" style="display:block;"><rect x="4.300" y="2" width="3.400" height="4.500" fill="#8CB8F4"/><path d="M2.500 1.600h7M3.800 2v4.800M8.200 2v4.800M1.200 7.300h9.600M6 8v5" stroke="#1E40B0" stroke-width="1.500" fill="none"/></svg></div><div class="a pb cl" style="left:655px;top:4px"><svg width="10" height="10" viewBox="0 0 10 10" style="display:block;"><path d="M2 2l6 6M8 2l-6 6" stroke="#fff" stroke-width="1.800"/></svg></div></div><div class="a tbar" style="left:602px;top:769px;width:673px;height:28px"><div class="a grip" style="left:4px;top:6px;height:18px"></div><div class="a" style="left:14px;top:5px;"><svg width="18" height="18" viewBox="0 0 18 18" style="display:block;"><path d="M1 2h2.500l0.800 1h3.200v3.500h-6.500z" fill="#d4d4d4" stroke="#a4a4a4" stroke-width="0.600"/><path d="M10 11.500h2.500l0.800 1h3.200v3.500h-6.500z" fill="#d4d4d4" stroke="#a4a4a4" stroke-width="0.600"/><path d="M4 7.500v7h5.500" stroke="#555" stroke-width="1" stroke-dasharray="1 1" fill="none"/><path d="M10 2.500h2.200q1.300 0 1.300 1.300v3" stroke="#333" stroke-width="1.200" fill="none"/><path d="M11.300 5.800l2.200 2.700 2.200-2.700z" fill="#333"/></svg></div><div class="a" style="left:39px;top:5px;"><svg width="18" height="18" viewBox="0 0 18 18" style="display:block;"><defs><linearGradient id="g95" x1="0" y1="0" x2="1" y2="0"><stop offset="0" stop-color="#f4f4f4"/><stop offset="0.35" stop-color="#ffffff"/><stop offset="1" stop-color="#c8c8c8"/></linearGradient></defs><path d="M9.500 9.500v-5a3 3 0 0 1 6 0v2.500" fill="none" stroke="#b4b4b4" stroke-width="1.300"/><rect x="1.500" y="9.500" width="9" height="6.500" fill="url(#g95)" stroke="#b4b4b4" stroke-width="0.900"/><path d="M4.500 9.500v6.500" stroke="#d8d8d8" stroke-width="1"/></svg></div><div class="a" style="left:62px;top:5px;"><svg width="18" height="18" viewBox="0 0 18 18" style="display:block;"><defs><linearGradient id="g96" x1="0" y1="0" x2="1" y2="0"><stop offset="0" stop-color="#f4f4f4"/><stop offset="0.35" stop-color="#ffffff"/><stop offset="1" stop-color="#c8c8c8"/></linearGradient></defs><path d="M4.500 9.500v-3.500a3 3 0 0 1 6 0v3.500" fill="none" stroke="#b4b4b4" stroke-width="1.300"/><rect x="2.500" y="9.500" width="10" height="6.500" fill="url(#g96)" stroke="#b4b4b4" stroke-width="0.900"/><path d="M5.500 9.500v6.500" stroke="#d8d8d8" stroke-width="1"/></svg></div><div class="a arr" style="left:85px;top:19px;border-top-color:#000"></div></div><div class="a" style="left:604px;top:799px;width:671px;height:15px;background:#ACA899"><div class="t" style="left:3px;top:0px;font:bold 13px 'Liberation Serif',serif;line-height:15px;letter-spacing:0.100px">Task: #181 - 'Receive Payment'</div></div><div class="a" style="left:602px;top:816px;width:673px;height:98px;border:1px solid #7F9DB9;background:#fff;overflow:hidden"><div class="a hdr ms" style="left:0;top:0;width:654px;height:19px"><div class="hc" style="left:0px;width:276px">Roles</div><div class="hc" style="left:276px;width:95px">View</div><div class="hc" style="left:371px;width:94px">Edit</div><div class="hc" style="left:465px;width:88px">Delete</div><div class="hc" style="left:553px;width:101px">Setting permissions</div><svg width="8" height="8" viewBox="0 0 8 8" style="display:block;position:absolute;left:262px;top:5px"><path d="M1 6.500h6l-3-5.500z" fill="none" stroke="#ACA899"/></svg></div><div class="row ms" style="top:19px;width:654px;height:19px"><div class="c" style="left:0;width:276px;height:18px;line-height:18px;padding-left:2px;font-weight:bold;">Unlimited</div><div class="c" style="left:276px;width:95px;height:18px;line-height:18px"><div class="a" style="left:3px;top:0"><svg width="17" height="18" viewBox="0 0 17 18" style="display:block;"><path d="M1.500 3.200h3.800v4.800M3.200 6l2.100 2.400 2.100-2.400" stroke="#7E82A2" fill="none" stroke-width="1.100"/><path d="M7.800 10.800V5.800a3.500 3.500 0 0 1 7 0V8" fill="none" stroke="#7E82A2" stroke-width="1.700"/><rect x="1.200" y="10.800" width="9.600" height="5.700" fill="#fff" stroke="#7E82A2" stroke-width="1"/><path d="M1.200 12.700h9.600M1.200 14.600h9.600" stroke="#7E82A2" stroke-width="0.900"/></svg></div><span style="position:absolute;left:23px">Allow(By Parent</span></div><div class="c" style="left:371px;width:94px;height:18px;line-height:18px"><div class="a" style="left:3px;top:0"><svg width="17" height="18" viewBox="0 0 17 18" style="display:block;"><path d="M1.500 3.200h3.800v4.800M3.200 6l2.100 2.400 2.100-2.400" stroke="#7E82A2" fill="none" stroke-width="1.100"/><path d="M7.800 10.800V5.800a3.500 3.500 0 0 1 7 0V8" fill="none" stroke="#7E82A2" stroke-width="1.700"/><rect x="1.200" y="10.800" width="9.600" height="5.700" fill="#fff" stroke="#7E82A2" stroke-width="1"/><path d="M1.200 12.700h9.600M1.200 14.600h9.600" stroke="#7E82A2" stroke-width="0.900"/></svg></div><span style="position:absolute;left:23px">Allow(By Parent</span></div><div class="c" style="left:465px;width:88px;height:18px;line-height:18px"><div class="a" style="left:3px;top:0"><svg width="17" height="18" viewBox="0 0 17 18" style="display:block;"><path d="M1.500 3.200h3.800v4.800M3.200 6l2.100 2.400 2.100-2.400" stroke="#7E82A2" fill="none" stroke-width="1.100"/><path d="M7.800 10.800V5.800a3.500 3.500 0 0 1 7 0V8" fill="none" stroke="#7E82A2" stroke-width="1.700"/><rect x="1.200" y="10.800" width="9.600" height="5.700" fill="#fff" stroke="#7E82A2" stroke-width="1"/><path d="M1.200 12.700h9.600M1.200 14.600h9.600" stroke="#7E82A2" stroke-width="0.900"/></svg></div><span style="position:absolute;left:23px">Allow(By Parent</span></div><div class="c" style="left:553px;width:101px;height:18px;line-height:18px"><div class="a" style="left:3px;top:0"><svg width="17" height="18" viewBox="0 0 17 18" style="display:block;"><path d="M1.500 3.200h3.800v4.800M3.200 6l2.100 2.400 2.100-2.400" stroke="#7E82A2" fill="none" stroke-width="1.100"/><path d="M7.800 10.800V5.800a3.500 3.500 0 0 1 7 0V8" fill="none" stroke="#7E82A2" stroke-width="1.700"/><rect x="1.200" y="10.800" width="9.600" height="5.700" fill="#fff" stroke="#7E82A2" stroke-width="1"/><path d="M1.200 12.700h9.600M1.200 14.600h9.600" stroke="#7E82A2" stroke-width="0.900"/></svg></div><span style="position:absolute;left:23px">Allow(By Parent</span></div></div><div class="row ms" style="top:38px;width:654px;height:19px"><div class="c" style="left:0;width:276px;height:18px;line-height:18px;padding-left:2px;background:#A6BFEB;">Administrator</div><div class="c" style="left:276px;width:95px;height:18px;line-height:18px"><div class="a" style="left:3px;top:0"><svg width="17" height="18" viewBox="0 0 17 18" style="display:block;"><path d="M1.500 3.200h3.800v4.800M3.200 6l2.100 2.400 2.100-2.400" stroke="#7E82A2" fill="none" stroke-width="1.100"/><path d="M7.800 10.800V5.800a3.500 3.500 0 0 1 7 0V8" fill="none" stroke="#7E82A2" stroke-width="1.700"/><rect x="1.200" y="10.800" width="9.600" height="5.700" fill="#fff" stroke="#7E82A2" stroke-width="1"/><path d="M1.200 12.700h9.600M1.200 14.600h9.600" stroke="#7E82A2" stroke-width="0.900"/></svg></div><span style="position:absolute;left:23px">Allow(By Parent</span></div><div class="c" style="left:371px;width:94px;height:18px;line-height:18px"><div class="a" style="left:3px;top:0"><svg width="17" height="18" viewBox="0 0 17 18" style="display:block;"><path d="M1.500 3.200h3.800v4.800M3.200 6l2.100 2.400 2.100-2.400" stroke="#7E82A2" fill="none" stroke-width="1.100"/><path d="M7.800 10.800V5.800a3.500 3.500 0 0 1 7 0V8" fill="none" stroke="#7E82A2" stroke-width="1.700"/><rect x="1.200" y="10.800" width="9.600" height="5.700" fill="#fff" stroke="#7E82A2" stroke-width="1"/><path d="M1.200 12.700h9.600M1.200 14.600h9.600" stroke="#7E82A2" stroke-width="0.900"/></svg></div><span style="position:absolute;left:23px">Allow(By Parent</span></div><div class="c" style="left:465px;width:88px;height:18px;line-height:18px"><div class="a" style="left:3px;top:0"><svg width="17" height="18" viewBox="0 0 17 18" style="display:block;"><path d="M1.500 3.200h3.800v4.800M3.200 6l2.100 2.400 2.100-2.400" stroke="#7E82A2" fill="none" stroke-width="1.100"/><path d="M7.800 10.800V5.800a3.500 3.500 0 0 1 7 0V8" fill="none" stroke="#7E82A2" stroke-width="1.700"/><rect x="1.200" y="10.800" width="9.600" height="5.700" fill="#fff" stroke="#7E82A2" stroke-width="1"/><path d="M1.200 12.700h9.600M1.200 14.600h9.600" stroke="#7E82A2" stroke-width="0.900"/></svg></div><span style="position:absolute;left:23px">Allow(By Parent</span></div><div class="c" style="left:553px;width:101px;height:18px;line-height:18px"><div class="a" style="left:3px;top:0"><svg width="17" height="18" viewBox="0 0 17 18" style="display:block;"><path d="M1.500 3.200h3.800v4.800M3.200 6l2.100 2.400 2.100-2.400" stroke="#7E82A2" fill="none" stroke-width="1.100"/><path d="M7.800 10.800V5.800a3.500 3.500 0 0 1 7 0V8" fill="none" stroke="#7E82A2" stroke-width="1.700"/><rect x="1.200" y="10.800" width="9.600" height="5.700" fill="#fff" stroke="#7E82A2" stroke-width="1"/><path d="M1.200 12.700h9.600M1.200 14.600h9.600" stroke="#7E82A2" stroke-width="0.900"/></svg></div><span style="position:absolute;left:23px">Allow(By Parent</span></div></div><div class="row ms" style="top:57px;width:654px;height:19px"><div class="c" style="left:0;width:276px;height:18px;line-height:18px;padding-left:2px;">Jennifer Lay</div><div class="c" style="left:276px;width:95px;height:18px;line-height:18px"><div class="a" style="left:3px;top:0"><svg width="17" height="18" viewBox="0 0 17 18" style="display:block;"><path d="M7.800 10.800V5.800a3.500 3.500 0 0 1 7 0V8" fill="none" stroke="#7E82A2" stroke-width="1.700"/><rect x="1.200" y="10.800" width="9.600" height="5.700" fill="#fff" stroke="#7E82A2" stroke-width="1"/><path d="M1.200 12.700h9.600M1.200 14.600h9.600" stroke="#7E82A2" stroke-width="0.900"/></svg></div><span style="position:absolute;left:23px">Allow</span></div><div class="c" style="left:371px;width:94px;height:18px;line-height:18px"><div class="a" style="left:3px;top:0"><svg width="17" height="18" viewBox="0 0 17 18" style="display:block;"><path d="M7.800 10.800V5.800a3.500 3.500 0 0 1 7 0V8" fill="none" stroke="#7E82A2" stroke-width="1.700"/><rect x="1.200" y="10.800" width="9.600" height="5.700" fill="#fff" stroke="#7E82A2" stroke-width="1"/><path d="M1.200 12.700h9.600M1.200 14.600h9.600" stroke="#7E82A2" stroke-width="0.900"/></svg></div><span style="position:absolute;left:23px">Allow</span></div><div class="c" style="left:465px;width:88px;height:18px;line-height:18px"><div class="a" style="left:3px;top:0"><svg width="17" height="18" viewBox="0 0 17 18" style="display:block;"><path d="M10.500 2.200h3.600v3.800M12.300 4.200l1.800 2.200 1.800-2.200" stroke="#7E82A2" fill="none" stroke-width="1.100"/><path d="M3.800 8.500V6.200a2.700 2.700 0 0 1 5.400 0V8.500" fill="none" stroke="#7E82A2" stroke-width="1.700"/><rect x="1.700" y="8.500" width="9.600" height="8" fill="#fff" stroke="#7E82A2" stroke-width="1"/><path d="M1.700 10.500h9.600M1.700 12.500h9.600M1.700 14.500h9.600" stroke="#7E82A2" stroke-width="0.900"/></svg></div><span style="position:absolute;left:23px">Deny(By Parent</span></div><div class="c" style="left:553px;width:101px;height:18px;line-height:18px"><div class="a" style="left:3px;top:0"><svg width="17" height="18" viewBox="0 0 17 18" style="display:block;"><path d="M10.500 2.200h3.600v3.800M12.300 4.200l1.800 2.200 1.800-2.200" stroke="#7E82A2" fill="none" stroke-width="1.100"/><path d="M3.800 8.500V6.200a2.700 2.700 0 0 1 5.400 0V8.500" fill="none" stroke="#7E82A2" stroke-width="1.700"/><rect x="1.700" y="8.500" width="9.600" height="8" fill="#fff" stroke="#7E82A2" stroke-width="1"/><path d="M1.700 10.500h9.600M1.700 12.500h9.600M1.700 14.500h9.600" stroke="#7E82A2" stroke-width="0.900"/></svg></div><span style="position:absolute;left:23px">Deny(By Parent</span></div></div><div class="row ms" style="top:76px;width:654px;height:19px"><div class="c" style="left:0;width:276px;height:18px;line-height:18px;padding-left:2px;">John Smith</div><div class="c" style="left:276px;width:95px;height:18px;line-height:18px"><div class="a" style="left:3px;top:0"><svg width="17" height="18" viewBox="0 0 17 18" style="display:block;"><path d="M7.800 10.800V5.800a3.500 3.500 0 0 1 7 0V8" fill="none" stroke="#7E82A2" stroke-width="1.700"/><rect x="1.200" y="10.800" width="9.600" height="5.700" fill="#fff" stroke="#7E82A2" stroke-width="1"/><path d="M1.200 12.700h9.600M1.200 14.600h9.600" stroke="#7E82A2" stroke-width="0.900"/></svg></div><span style="position:absolute;left:23px">Allow</span></div><div class="c" style="left:371px;width:94px;height:18px;line-height:18px"><div class="a" style="left:3px;top:0"><svg width="17" height="18" viewBox="0 0 17 18" style="display:block;"><path d="M7.800 10.800V5.800a3.500 3.500 0 0 1 7 0V8" fill="none" stroke="#7E82A2" stroke-width="1.700"/><rect x="1.200" y="10.800" width="9.600" height="5.700" fill="#fff" stroke="#7E82A2" stroke-width="1"/><path d="M1.200 12.700h9.600M1.200 14.600h9.600" stroke="#7E82A2" stroke-width="0.900"/></svg></div><span style="position:absolute;left:23px">Allow</span></div><div class="c" style="left:465px;width:88px;height:18px;line-height:18px"><div class="a" style="left:3px;top:0"><svg width="17" height="18" viewBox="0 0 17 18" style="display:block;"><path d="M10.500 2.200h3.600v3.800M12.300 4.200l1.800 2.200 1.800-2.200" stroke="#7E82A2" fill="none" stroke-width="1.100"/><path d="M3.800 8.500V6.200a2.700 2.700 0 0 1 5.400 0V8.500" fill="none" stroke="#7E82A2" stroke-width="1.700"/><rect x="1.700" y="8.500" width="9.600" height="8" fill="#fff" stroke="#7E82A2" stroke-width="1"/><path d="M1.700 10.500h9.600M1.700 12.500h9.600M1.700 14.500h9.600" stroke="#7E82A2" stroke-width="0.900"/></svg></div><span style="position:absolute;left:23px">Deny(By Parent</span></div><div class="c" style="left:553px;width:101px;height:18px;line-height:18px"><div class="a" style="left:3px;top:0"><svg width="17" height="18" viewBox="0 0 17 18" style="display:block;"><path d="M10.500 2.200h3.600v3.800M12.300 4.200l1.800 2.200 1.800-2.200" stroke="#7E82A2" fill="none" stroke-width="1.100"/><path d="M3.800 8.500V6.200a2.700 2.700 0 0 1 5.400 0V8.500" fill="none" stroke="#7E82A2" stroke-width="1.700"/><rect x="1.700" y="8.500" width="9.600" height="8" fill="#fff" stroke="#7E82A2" stroke-width="1"/><path d="M1.700 10.500h9.600M1.700 12.500h9.600M1.700 14.500h9.600" stroke="#7E82A2" stroke-width="0.900"/></svg></div><span style="position:absolute;left:23px">Deny(By Parent</span></div></div><div class="a sb" style="left:655px;top:0px;width:17px;height:96px"><div class="a sbtn" style="left:1px;top:0;width:15px;height:16px"></div><svg class="a" style="left:4px;top:4px" width="9" height="9" viewBox="0 0 9 9"><path d="M0.800 5.800l3.700-3.600 3.700 3.600" stroke="#4D6185" stroke-width="2" fill="none"/></svg><div class="a sbtn" style="left:1px;top:80px;width:15px;height:16px"></div><svg class="a" style="left:4px;top:84px" width="9" height="9" viewBox="0 0 9 9"><path d="M0.800 1.200l3.700 3.600 3.700-3.600" stroke="#4D6185" stroke-width="2" fill="none"/></svg><div class="a sthumb" style="left:1px;top:18px;width:15px;height:40px"></div><div class="a" style="left:5px;top:34px;width:6px;height:8px;background:repeating-linear-gradient(to bottom,#EEF4FE 0,#EEF4FE 1px,#8CB0F8 1px,#8CB0F8 2px)"></div></div></div><div class="a" style="left:602px;top:914px;width:673px;height:5px;background:#FBFBF8"></div><div class="a" style="left:602px;top:919px;width:673px;height:25px;background:#F3F2EC;border-top:1px solid #91A7B4"></div><div class="a" style="left:606px;top:919px;width:87px;height:23px;background:#FCFCFE;border:1px solid #91A7B4;border-top:none;border-bottom:3px solid #FFB834;border-radius:0 0 3px 3px"><div class="a" style="left:3px;top:2px;"><svg width="18" height="17" viewBox="0 0 18 17" style="display:block;"><circle cx="12" cy="5.500" r="3.800" fill="#ececf4" stroke="#8a8aa0" stroke-width="1.200"/><circle cx="12.800" cy="4.700" r="1.200" fill="#fff" stroke="#9a9ab0" stroke-width="0.600"/><path d="M9.300 8.200l-7.300 7.300M3.500 13.800l1.800 1.800M5.500 11.800l1.800 1.800" stroke="#8a8aa0" stroke-width="1.600"/></svg></div><div class="t ms" style="left:24px;top:4px;letter-spacing:-0.450px">Permissions</div></div><div class="a" style="left:1239px;top:924px;width:14px;height:14px;border-radius:2px;background:linear-gradient(135deg,#CDDCFD,#B5C8F7);box-shadow:0 1px 0 #8FA8E8, 0 0 0 1px #fff"></div><svg class="a" style="left:1241px;top:926px" width="9" height="9" viewBox="0 0 9 9"><path d="M5.800 0.800l-3.600 3.700 3.600 3.700" stroke="#4D6185" stroke-width="2" fill="none"/></svg><div class="a" style="left:1255px;top:924px;width:14px;height:14px;border-radius:2px;background:#E8E6DA;box-shadow:0 0 0 1px #F8F7F2"></div><svg class="a" style="left:1258px;top:926px" width="9" height="9" viewBox="0 0 9 9"><path d="M3.200 0.800l3.600 3.700-3.600 3.700" stroke="#C4C1B4" stroke-width="2" fill="none"/></svg></body></html>
